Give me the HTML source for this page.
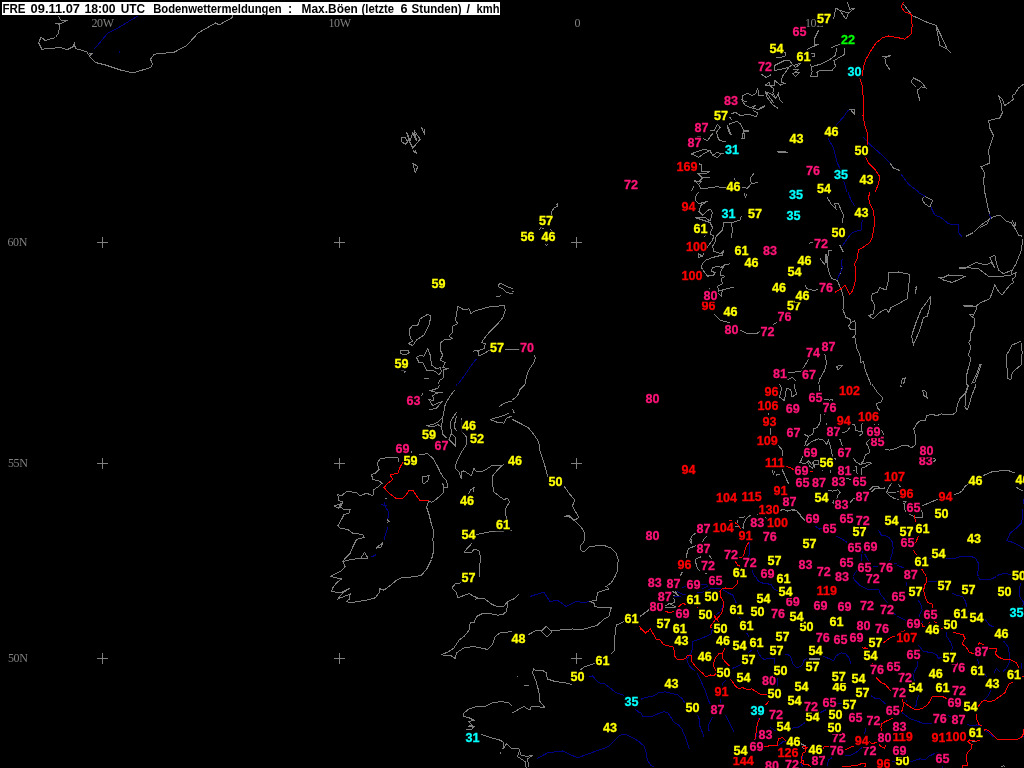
<!DOCTYPE html>
<html lang="de"><head><meta charset="utf-8"><title>Bodenwettermeldungen : Max.B&ouml;en</title>
<style>
html,body{margin:0;padding:0;background:#000;overflow:hidden}
svg{display:block;will-change:transform}
.g polyline{stroke:#808080}
.b polyline{stroke:#000084}
.r polyline{stroke:#ff0000}
polyline{fill:none;stroke-width:1;shape-rendering:crispEdges}
.n text{font:bold 12.6px "Liberation Sans", Arial, Helvetica, sans-serif;stroke-width:0.3px}
.n rect{fill:#000}
.l{font:12px "Liberation Serif", "Times New Roman", serif;fill:#808080;letter-spacing:-0.4px}
.x{stroke:#808080;stroke-width:1;shape-rendering:crispEdges}
.h{font:bold 12.6px "Liberation Sans", Arial, Helvetica, sans-serif;fill:#000}
</style></head><body>
<svg width="1024" height="768" viewBox="0 0 1024 768">
<rect width="1024" height="768" fill="#000"/>

<g class="g">
<polyline points="58.5,16.0 60.5,20.0 66.8,20.5 61.8,23.0 55.0,23.8 60.0,24.2 58.5,33.0 55.5,37.5 45.0,40.5 41.0,36.8 38.8,43.0 41.8,49.2 60.5,47.5 66.8,49.8 73.0,46.8 74.2,43.0 75.5,48.5 86.8,51.8 88.0,54.2 93.0,53.0 89.2,56.0 95.5,62.5 105.5,65.0 120.5,70.0 133.0,73.0 150.5,67.5 152.5,64.2 150.5,59.2 154.2,54.2 174.2,52.2 186.8,45.5 198.0,33.0 215.5,23.0 219.2,24.8 231.8,18.0 233.0,15.5"/>
<polyline points="401.5,138.0 405.2,137.5 407.8,141.8 405.2,144.2 401.5,141.8 401.5,138.0"/>
<polyline points="406.5,131.8 410.2,140.5 412.8,133.0 416.5,140.5 414.0,130.5 420.2,139.2 412.8,148.0 409.0,140.5 406.5,131.8"/>
<polyline points="421.5,127.5 425.2,135.5 424.0,129.2"/>
<polyline points="412.8,150.5 416.5,153.5 415.2,150.0"/>
<polyline points="412.8,163.0 417.8,166.8 415.2,172.5 412.8,163.0"/>
<polyline points="780.3,51.3 785.9,52.3 785.0,56.0 779.4,57.9 775.6,56.9"/>
<polyline points="811.3,53.2 814.1,53.2 814.1,56.0 812.2,56.0"/>
<polyline points="836.6,48.5 835.6,55.1 830.9,58.8 822.5,63.5 811.3,66.9 810.3,64.4"/>
<polyline points="811.3,66.9 812.2,71.9 810.3,76.6 817.8,76.6 816.9,71.9 820.6,70.1 831.9,70.6 835.6,66.3 833.8,60.7 845.0,54.1 844.1,48.5"/>
<polyline points="774.7,65.4 784.1,60.7 789.7,60.7 792.5,64.4 788.8,67.3 781.3,69.1 774.7,70.6 774.7,65.4"/>
<polyline points="792.5,64.4 795.3,67.3 800.0,64.4"/>
<polyline points="792.5,69.1 799.1,69.1 794.4,72.9 799.1,72.9 795.3,76.6 792.5,72.9"/>
<polyline points="760.6,73.8 766.3,77.6 770.9,74.8"/>
<polyline points="788.8,67.3 785.0,72.9 782.2,76.6 781.3,82.3 785.0,83.2 780.3,85.1 774.7,80.4 774.7,85.1 770.0,86.0 765.3,85.1 769.1,82.3 770.0,86.0"/>
<polyline points="770.0,86.0 773.8,88.8 772.8,92.6 775.6,98.2 778.4,93.5 779.4,99.1 783.1,102.9"/>
<polyline points="765.3,91.6 771.9,94.4 774.7,98.2"/>
<polyline points="765.3,91.6 767.2,97.3 772.8,104.8 778.4,108.5"/>
<polyline points="766.3,92.6 773.8,102.9"/>
<polyline points="757.8,87.9 755.9,93.5 752.2,95.4 747.5,93.5 742.8,95.4 741.9,100.1 744.7,104.8 750.3,107.6 755.0,105.7 753.1,108.5 758.8,109.4 765.3,106.3"/>
<polyline points="758.8,108.7 765.3,105.5"/>
<polyline points="741.9,100.1 746.6,101.9"/>
<polyline points="757.8,87.9 758.8,95.4 764.4,95.4"/>
<polyline points="730.6,114.1 735.3,112.3 740.9,116.0 746.6,114.1 751.3,115.1 755.9,116.9 757.8,113.2 753.1,110.4"/>
<polyline points="729.7,116.9 731.6,119.8"/>
<polyline points="728.8,124.4 732.5,122.6 737.2,121.6 740.9,124.4 743.8,131.0 744.7,138.5 741.9,138.5 742.8,133.8 744.7,130.4 749.0,130.4"/>
<polyline points="744.7,131.2 749.0,131.2"/>
<polyline points="726.9,125.4 728.8,131.0 730.6,134.8"/>
<polyline points="727.6,125.4 729.5,131.0 731.4,134.8"/>
<polyline points="710.0,130.1 713.8,131.0 717.5,124.4 720.3,127.3 716.6,131.9 717.5,136.6 719.4,140.4 725.9,141.7"/>
<polyline points="696.9,136.1 700.6,136.1"/>
<polyline points="703.4,138.5 707.2,140.8 712.8,133.8 710.0,136.6"/>
<polyline points="691.3,153.9 696.9,151.6 704.4,149.2 710.0,150.7 705.3,152.6 698.8,157.3 691.3,153.9"/>
<polyline points="710.0,150.7 712.8,155.4 716.6,152.6 721.3,153.5 724.1,153.9"/>
<polyline points="712.8,155.4 717.5,157.8 721.3,153.5"/>
<polyline points="698.8,163.8 701.0,164.4 701.0,171.3 710.0,171.3 705.3,173.8 697.8,173.2"/>
<polyline points="697.8,173.2 702.5,177.9 710.0,177.5"/>
<polyline points="702.5,177.9 698.8,181.6 694.1,180.7 698.8,184.4 701.6,180.7"/>
<polyline points="694.1,186.3 691.3,191.0"/>
<polyline points="698.8,184.4 700.6,188.2 706.3,188.2 715.6,186.9 726.9,187.3"/>
<polyline points="734.4,177.9 735.3,180.7"/>
<polyline points="754.1,173.2 750.3,177.9 751.3,183.5 757.8,182.6"/>
<polyline points="751.3,183.5 747.5,188.2 741.9,187.3"/>
<polyline points="777.5,151.3 787.8,152.2"/>
<polyline points="777.5,152.0 787.8,152.9"/>
<polyline points="903.5,4.2 912.2,15.5 926.0,21.8 936.0,25.5 941.0,35.5 947.2,49.2 951.0,53.0"/>
<polyline points="936.0,25.5 939.8,45.5 947.2,49.2"/>
<polyline points="882.2,56.8 891.0,55.5 884.8,58.0 886.0,64.2 890.2,70.0"/>
<polyline points="911.0,81.8 913.5,78.0 921.0,81.8 926.0,88.0 921.0,86.8 917.2,90.5 919.8,100.5"/>
<polyline points="911.0,81.8 916.0,86.8"/>
<polyline points="1023.5,84.2 1018.5,88.0 1014.8,94.2 1012.2,95.5 1013.5,99.2 1008.5,103.0 1004.8,105.5 1002.2,99.2 998.5,95.5 1001.0,103.0 1002.2,113.0 999.8,118.0 988.5,120.5 989.8,128.0 993.5,135.5 988.5,150.5 989.8,163.0 981.0,166.8 984.8,173.0 983.5,180.5 984.8,192.5"/>
<polyline points="847.2,1.8 849.8,9.2 854.8,8.0 848.5,13.0 846.0,19.2 839.8,10.5 836.0,8.0 833.5,19.2"/>
<polyline points="839.8,10.5 848.5,13.0"/>
<polyline points="818.5,30.5 814.8,38.0 814.2,44.2 818.5,44.2 807.2,49.2"/>
<polyline points="793.5,65.5 801.0,63.0"/>
<polyline points="831.0,48.0 836.0,45.5 841.0,44.2"/>
<polyline points="848.5,109.8 854.8,109.8 854.8,114.2 851.0,110.5"/>
<polyline points="889.8,163.0 893.5,168.0 899.8,170.5"/>
<polyline points="497.8,286.2 500.2,283.0 506.5,286.2 512.5,288.8"/>
<polyline points="512.5,293.8 506.5,292.5 502.8,288.8 497.8,286.2"/>
<polyline points="496.5,297.0 501.5,295.5"/>
<polyline points="427.8,314.2 431.0,316.2 429.0,325.0 424.0,335.0 416.5,340.0 412.8,345.5 408.2,343.8 412.8,341.2 410.2,337.5 409.0,330.0 412.8,325.0 417.8,325.0 420.2,318.8 427.8,314.2"/>
<polyline points="399.8,350.5 407.8,350.0 409.5,352.5 405.2,355.0 401.0,353.8 399.8,350.5"/>
<polyline points="401.0,370.5 405.2,371.2 404.8,373.0"/>
<polyline points="416.5,357.5 420.2,355.0 424.0,356.2 427.8,348.8 430.2,355.0 431.5,365.0 436.5,368.8 440.2,367.5 441.5,371.2 439.0,375.0 435.2,371.2 426.5,370.0 422.8,362.5 419.0,362.5 416.5,357.5"/>
<polyline points="424.5,378.8 429.0,378.0"/>
<polyline points="457.8,306.2 464.0,310.0 469.0,308.8 471.0,313.8 474.0,311.2 489.0,307.0 504.0,305.5 505.2,310.0 502.8,317.5 497.8,323.8 489.0,332.5 484.0,338.8 481.5,342.5 485.2,343.8 484.0,348.8 477.8,350.5 472.8,351.2"/>
<polyline points="477.8,350.5 479.0,356.2 490.2,350.0"/>
<polyline points="504.5,349.2 512.5,349.2"/>
<polyline points="457.8,306.2 456.5,315.0 455.2,320.0 457.8,323.8 452.8,326.2 452.8,332.5 449.0,336.2 452.8,338.8 444.0,340.0 440.8,342.5 440.2,350.0 442.8,355.0 440.2,360.0 445.2,362.5 442.8,367.5 447.8,368.8 443.5,370.0 444.0,377.5 440.2,380.0 437.8,384.5"/>
<polyline points="558.0,203.0 557.5,206.2 553.8,208.0 552.0,211.2 551.2,214.5"/>
<polyline points="556.2,204.5 558.0,203.0"/>
<polyline points="538.8,230.0 541.2,227.5 543.8,228.8"/>
<polyline points="550.0,228.8 552.5,231.2"/>
<polyline points="544.5,243.8 546.2,245.5 548.2,244.5"/>
<polyline points="512.5,291.2 513.8,291.8"/>
<polyline points="512.5,349.2 519.5,350.0"/>
<polyline points="533.8,355.0 535.5,357.5 533.8,362.5 528.8,370.0 526.2,377.5 525.0,384.5"/>
<polyline points="698.8,192.5 696.2,195.0 695.0,200.0 698.8,203.8 707.5,201.2 701.2,205.0 698.8,211.2 702.5,215.0 710.0,208.8 712.5,212.5 710.0,221.2 705.0,217.5 695.0,217.5 702.5,220.0 710.0,222.5 712.5,227.5 710.0,233.8 713.8,236.2 712.5,240.0 706.2,248.8 702.5,256.2 698.8,257.5 698.8,253.8 702.5,256.2"/>
<polyline points="706.2,235.0 703.8,237.0"/>
<polyline points="741.2,216.2 740.0,220.0 732.5,222.5 723.8,222.5 722.5,230.0 716.2,236.2 715.0,242.5 712.5,246.2 713.8,251.2 721.2,253.8 723.8,250.0 722.5,255.0 712.5,257.5 706.2,260.0 702.5,263.8 701.2,267.5 703.8,271.2 707.5,276.2 713.8,275.0 715.0,272.5 711.2,271.2 712.5,267.5 718.8,266.2 721.2,267.5 723.8,265.0 730.0,263.8 725.0,265.0 721.2,270.0 720.0,275.0 725.0,276.2 721.2,278.8 722.5,283.8 717.5,286.2 718.8,291.2 722.5,290.0 733.8,287.0"/>
<polyline points="722.5,290.0 721.2,296.2 717.5,292.5"/>
<polyline points="731.2,222.5 732.5,230.0 731.2,237.5"/>
<polyline points="743.8,192.5 745.5,197.0 746.8,193.8"/>
<polyline points="713.8,313.8 720.0,320.0 730.0,323.0"/>
<polyline points="740.0,330.0 747.5,333.8 756.2,333.8 760.0,331.2"/>
<polyline points="708.8,287.5 710.0,289.5"/>
<polyline points="827.2,197.5 831.0,203.8 836.0,208.8 834.8,203.8 838.5,203.8 841.0,210.0 843.5,215.0 842.2,222.5"/>
<polyline points="808.5,243.2 813.5,242.5"/>
<polyline points="839.8,245.0 842.8,252.0"/>
<polyline points="840.2,245.0 843.2,252.0"/>
<polyline points="819.8,258.0 824.8,265.0 826.0,253.8 827.2,265.0 828.5,250.0 832.2,250.0"/>
<polyline points="827.2,265.0 829.8,275.0 832.2,278.8 837.2,280.5 841.0,288.8 843.5,297.5 843.0,310.0 846.0,317.5 849.8,318.8 851.0,322.5 854.8,320.5 856.0,328.8 851.0,330.0 848.5,326.2 851.0,322.5"/>
<polyline points="856.0,328.8 854.8,336.2 852.2,338.0 854.8,336.2 856.5,347.5 859.8,355.0 861.0,362.5 863.5,361.2 864.8,368.8 867.2,375.0 871.0,384.5"/>
<polyline points="842.2,267.5 838.5,277.5"/>
<polyline points="804.8,285.0 807.2,288.8 814.8,290.8 818.5,288.8"/>
<polyline points="773.0,324.5 777.2,322.5"/>
<polyline points="824.8,353.8 826.5,362.5 824.8,370.0 819.8,378.8 818.5,384.5"/>
<polyline points="808.5,359.5 803.5,367.5 801.0,371.2 788.5,373.0"/>
<polyline points="782.2,378.8 787.2,380.0 792.2,377.5 796.0,381.2"/>
<polyline points="836.5,366.2 842.2,365.5 838.0,370.0 836.5,366.2"/>
<polyline points="888.5,273.0 898.5,272.0 907.2,273.8 909.8,275.0 908.5,287.5 907.2,298.8 898.5,303.8 891.0,307.5 888.5,312.5 886.0,308.8 879.8,312.5 873.5,318.8 868.5,315.8 873.5,313.8 874.8,305.0 871.0,298.8 872.2,293.8 877.2,292.5 879.8,287.5 886.0,290.0 888.0,282.5 888.5,273.0"/>
<polyline points="931.0,296.2 929.8,307.5 927.2,316.2 923.5,317.5 919.8,330.0 913.5,344.5 911.5,336.2 916.0,322.5 921.0,310.0 931.0,296.2"/>
<polyline points="914.8,287.5 916.5,287.0 915.2,293.8"/>
<polyline points="901.0,384.5 902.2,378.8 905.2,378.0 903.5,384.5"/>
<polyline points="938.0,277.0 943.5,277.5 948.5,275.0 966.0,276.2 952.2,282.5 943.5,280.0 938.0,277.0"/>
<polyline points="958.5,267.5 966.0,267.5 976.0,262.5 986.0,265.0 991.0,262.5 994.8,267.5 989.8,257.5 994.8,255.0 996.0,261.2 998.5,270.0 1003.5,273.8 1012.2,270.0 1011.0,275.0 1016.0,272.5 1014.8,277.5 1012.2,278.8 1013.5,282.5 1009.8,285.0 1002.2,295.0 998.5,291.2 994.8,285.0 989.8,298.8 981.0,302.5 976.0,306.2 963.5,305.5"/>
<polyline points="958.5,268.0 966.0,268.0"/>
<polyline points="963.5,306.0 976.0,306.8"/>
<polyline points="976.0,306.2 976.0,310.0 973.5,315.0 968.5,313.8 974.8,318.8 974.8,325.0 971.0,332.5 970.5,340.0 968.5,342.5 971.0,346.2 968.5,355.0 971.0,358.8 968.5,367.5 966.0,377.5 966.0,384.5"/>
<polyline points="966.0,267.5 978.5,268.8 988.5,276.2 1002.2,276.2 1011.0,275.0"/>
<polyline points="984.8,192.5 988.5,210.0 989.8,213.8"/>
<polyline points="990.2,218.8 994.8,216.2 999.8,215.0 1006.0,221.2 1011.0,222.5 1016.0,230.0 1018.5,235.0 1022.2,236.2"/>
<polyline points="1012.2,220.0 1014.8,226.2 1016.0,222.5"/>
<polyline points="966.0,236.2 973.5,232.5 981.0,225.0 989.8,218.8 987.2,223.8 979.8,227.5"/>
<polyline points="1023.0,238.8 1021.0,251.2 1016.0,263.8 1012.2,270.0"/>
<polyline points="921.8,198.8 924.8,196.2 932.8,200.5 929.8,207.0 924.8,203.8 921.8,198.8"/>
<polyline points="1021.0,341.2 1012.2,345.0 1006.0,356.2 1008.0,378.8 1011.0,379.5 1012.2,372.5 1021.0,365.0 1022.2,352.5 1021.0,342.5"/>
<polyline points="981.5,363.8 978.5,372.5 974.8,382.5 972.2,383.0 977.2,372.5 979.8,364.5 981.5,363.8"/>
<polyline points="399.0,462.0 397.8,457.0 389.0,457.0 380.2,459.0 377.0,463.2 379.0,469.5 375.2,473.2 371.5,474.5 372.8,479.5 379.0,480.8 382.2,483.2 377.8,487.0 374.0,489.5 372.8,495.8 366.5,493.2 360.2,495.8 356.5,492.5 346.5,491.5 341.5,495.8 337.8,494.5 339.0,500.8 342.8,502.0 340.2,507.0 344.0,509.5 350.2,509.5 349.0,513.2 344.0,514.5 340.2,522.0 337.8,525.8 340.2,528.2 347.8,529.5 352.8,533.2 362.8,534.5 364.0,537.5 356.5,539.5 352.8,547.0 350.2,553.2 345.2,558.2 342.8,561.5 351.5,559.5 361.5,558.2 367.8,558.2"/>
<polyline points="342.8,561.5 345.2,567.0 341.5,570.8 336.5,573.2 330.2,576.5"/>
<polyline points="334.0,506.2 340.2,504.0 339.0,508.2 334.0,506.2"/>
<polyline points="361.0,557.8 364.5,552.5 367.8,557.8"/>
<polyline points="376.0,548.2 382.8,542.5 381.0,547.0 376.0,548.2"/>
<polyline points="387.0,519.5 389.0,521.5 387.0,522.8"/>
<polyline points="419.0,454.5 427.8,453.8 432.8,458.2 436.5,464.5 440.2,472.0 442.8,476.5 446.5,480.8 447.8,487.0 444.0,487.5 442.8,483.2 444.0,492.0 440.2,495.8 435.2,500.0 431.5,502.5 429.0,500.8"/>
<polyline points="429.0,500.8 426.5,507.0 429.0,514.5 431.5,524.5 434.0,532.0 432.8,539.5 434.0,549.5 431.5,559.5 426.5,569.5 421.5,575.0 416.5,576.5"/>
<polyline points="422.0,476.5 429.0,475.8 427.8,480.8 424.0,483.8 422.0,482.5 422.0,476.5"/>
<polyline points="411.0,451.5 412.0,453.2"/>
<polyline points="384.5,498.2 386.5,498.2"/>
<polyline points="440.2,384.5 437.8,388.2 430.2,390.8 435.2,392.0 442.8,392.0 436.5,393.2 432.8,395.8 434.0,400.8 429.0,399.5 432.8,405.8 437.8,403.2 441.5,402.0 436.5,408.2 429.0,410.0"/>
<polyline points="455.2,389.5 450.2,395.8 445.2,404.5 442.8,417.0 441.5,427.0 437.8,424.5 432.8,427.0 426.5,425.8 432.8,424.5 437.8,422.0 442.8,417.0"/>
<polyline points="441.5,427.0 442.8,434.5 446.5,438.2"/>
<polyline points="456.5,412.0 450.2,422.0 451.5,433.2 449.0,439.5 455.2,445.8 455.8,438.2 451.5,433.2"/>
<polyline points="456.5,415.8 454.0,427.0 456.5,430.8"/>
<polyline points="461.5,418.2 461.5,430.8 466.5,437.0 466.5,444.5 461.5,452.0 456.5,462.0 455.2,468.2 459.0,472.0 461.5,479.0 461.5,472.0 464.0,470.8 471.5,475.8 474.0,468.2 476.5,472.0 484.0,470.8 491.5,465.8 502.8,465.0 497.8,469.5 492.8,475.8 492.2,483.2 494.0,492.0 500.2,497.0 504.0,499.5 507.8,498.2 509.5,502.0 505.2,509.5 506.5,519.5 507.8,527.0"/>
<polyline points="512.5,400.8 504.0,403.2 499.0,407.0"/>
<polyline points="490.2,419.5 496.5,422.0 504.0,423.2 506.5,418.2 512.5,415.8"/>
<polyline points="490.2,419.5 502.8,415.8 509.0,413.2"/>
<polyline points="468.5,494.0 471.0,489.5 474.0,487.5 472.8,492.5"/>
<polyline points="476.5,534.5 489.0,532.0 496.5,531.2 512.5,530.8"/>
<polyline points="472.0,543.2 464.0,552.0 471.5,552.5 474.0,549.0 479.0,550.8 481.0,559.5 479.0,567.0 479.0,576.5"/>
<polyline points="422.8,393.2 421.5,395.8"/>
<polyline points="525.0,384.5 520.0,389.5 517.5,395.8 512.5,400.0"/>
<polyline points="512.5,409.5 514.5,412.5 512.5,413.2"/>
<polyline points="512.5,419.5 520.0,423.2 528.8,428.2 533.8,434.5 538.8,442.0 540.0,450.8 543.8,462.0 547.5,475.8 549.5,478.2"/>
<polyline points="563.8,485.8 570.0,494.5 575.0,500.0 572.5,505.8 575.0,510.8 578.8,517.0 576.2,519.5 572.5,519.0 568.8,515.0 563.8,517.0 568.8,516.5 572.5,519.0 580.0,525.8 583.8,530.8 585.0,537.0 583.8,542.0 580.0,545.8 580.0,549.5 583.8,552.0 588.8,547.0 596.2,545.8 605.0,545.8 611.2,548.2 616.2,553.2 618.2,559.5 617.5,570.8 615.0,576.5"/>
<polyline points="330.2,576.5 336.5,577.8 341.5,579.0 336.5,582.8 332.8,587.8 331.5,591.5 340.2,592.8 350.2,587.8 342.8,592.8 337.8,599.0 344.0,596.5 350.2,594.0 349.5,599.0 346.5,601.5 351.5,602.8 357.8,601.5 366.5,600.2 375.2,597.8 379.0,592.8 379.0,588.5 384.0,590.2 389.0,586.5 396.5,580.2 401.5,577.8 416.5,576.5"/>
<polyline points="461.5,582.8 455.2,584.0 452.0,587.8 456.5,592.8 457.8,597.8 469.0,593.5 474.0,596.5 477.8,597.8 476.5,599.0 484.0,598.5 491.5,604.0 497.8,607.0 504.0,606.0 507.8,601.5 512.5,599.5"/>
<polyline points="507.8,601.5 506.5,611.5 502.8,614.5 497.8,615.2 489.0,613.5 481.5,614.0 476.5,616.5 474.0,622.8 470.2,622.8 469.0,630.2 464.0,636.5 459.0,640.2 454.0,647.8 449.0,651.5 442.0,654.5 445.2,656.0 450.2,655.2 455.2,658.5 456.5,652.8 464.0,647.8 474.0,646.5 487.8,649.5 492.8,644.0 495.2,636.5 500.2,632.8 512.5,631.5"/>
<polyline points="512.5,706.5 509.0,702.8 501.5,701.5 492.8,702.8 485.2,706.5 476.5,706.5 469.0,709.0 464.0,712.8 463.5,716.5 469.0,717.8 474.0,720.2 469.0,721.5 472.0,725.2 467.8,726.5 474.0,726.5 471.5,729.5 466.0,729.5"/>
<polyline points="481.5,734.5 491.5,737.8 500.2,740.2 504.0,742.8 502.8,749.0 506.5,744.0 512.5,749.0"/>
<polyline points="500.2,751.5 500.2,754.0"/>
<polyline points="615.0,576.5 611.2,582.8 606.2,586.5 608.8,589.0 603.8,590.2 597.5,592.8 596.2,600.2 588.8,601.5 593.8,602.8 595.0,606.5 601.2,607.8 611.2,607.8 608.8,616.5 603.8,619.0 597.5,625.2 582.5,629.5 572.5,629.0 557.5,630.2 551.2,630.2"/>
<polyline points="541.2,631.5 546.2,626.5 552.0,632.0 547.0,637.0 541.2,631.5"/>
<polyline points="541.2,630.2 535.0,631.0 527.5,635.2"/>
<polyline points="512.5,600.2 518.8,594.0"/>
<polyline points="648.8,610.2 640.0,616.5"/>
<polyline points="623.8,621.5 616.2,625.2 614.5,639.0 615.0,650.2 611.2,653.5"/>
<polyline points="595.0,663.5 585.0,666.5 580.0,670.2"/>
<polyline points="572.5,684.5 565.0,682.8 555.0,681.5 547.5,679.0 546.2,672.8 542.5,670.2 536.2,671.0 533.8,669.0 532.5,672.8 536.2,681.5 538.8,691.5 540.0,701.5 545.0,707.8 537.5,706.5 531.2,706.5 530.0,710.2 523.8,706.5 512.5,712.8"/>
<polyline points="517.0,676.5 518.0,677.0"/>
<polyline points="523.8,685.8 528.8,685.8"/>
<polyline points="512.5,748.5 518.8,748.5 521.2,755.2 527.5,756.5 532.5,755.2 527.5,759.0 528.8,766.5"/>
<polyline points="520.0,749.0 517.5,756.5 525.0,761.5 526.2,768.5"/>
<polyline points="768.9,412.6 768.9,415.1"/>
<polyline points="770.8,428.2 770.8,434.5"/>
<polyline points="778.2,445.4 782.0,449.5 782.2,456.4"/>
<polyline points="782.0,469.5 784.5,474.5 787.0,480.5"/>
<polyline points="772.6,470.1 773.2,474.5 775.1,470.8"/>
<polyline points="775.8,475.1 780.1,474.5"/>
<polyline points="779.5,384.5 782.0,388.2 780.8,392.0 779.5,397.0 784.5,400.8 785.8,392.0 787.0,388.2 790.8,389.5 792.0,397.0 797.0,393.9 795.1,389.5 794.5,384.5"/>
<polyline points="896.5,448.2 901.5,445.8 908.4,446.0 911.2,448.0 915.9,444.5 915.2,434.5 913.8,428.9 916.5,423.9 920.9,420.1 925.5,421.0 926.5,415.1 934.0,414.8 936.5,415.8 941.5,413.9 946.5,414.8 952.1,414.8 955.9,412.6 957.8,403.2 960.2,398.2 964.6,393.9 967.8,388.2 968.4,384.5"/>
<polyline points="967.8,384.5 965.2,397.0 965.0,407.0 967.1,410.1 968.4,407.6 971.5,396.4 975.2,387.0 975.5,384.5"/>
<polyline points="922.8,389.8 925.9,391.4 927.1,398.0 923.4,395.1 922.8,389.8"/>
<polyline points="900.2,384.5 900.2,386.0 902.1,386.0"/>
<polyline points="933.4,458.2 936.2,459.9 933.4,461.8"/>
<polyline points="982.8,475.8 991.5,472.0 1000.2,470.8 1009.0,470.8 1015.2,473.2"/>
<polyline points="696.1,533.0 692.4,535.5 689.9,540.5 691.1,543.6 691.8,539.2"/>
<polyline points="707.4,535.5 704.2,538.6 702.4,542.4"/>
<polyline points="696.1,545.5 688.6,548.6 686.8,554.2 686.8,558.0"/>
<polyline points="699.9,555.5 700.2,557.4 696.1,558.6 695.5,561.8 697.4,568.0 699.9,571.1"/>
<polyline points="709.2,555.5 712.4,559.5"/>
<polyline points="704.9,573.0 707.4,573.0"/>
<polyline points="682.4,571.8 679.9,576.5"/>
<polyline points="712.0,526.1 712.0,527.4"/>
<polyline points="712.0,531.1 712.0,532.0"/>
<polyline points="739.2,518.0 745.5,516.8"/>
<polyline points="737.4,520.5 738.0,522.4"/>
<polyline points="751.1,514.9 746.8,518.0 743.6,523.6 743.0,527.4 744.2,529.2"/>
<polyline points="756.8,513.6 757.4,514.9"/>
<polyline points="734.9,526.8 738.6,527.0"/>
<polyline points="765.5,517.4 768.5,520.5"/>
<polyline points="780.4,511.1 782.9,509.0 787.2,511.1 792.2,509.5 796.6,510.2 799.8,514.2 802.9,518.6 805.4,521.1"/>
<polyline points="792.2,510.0 796.6,510.8 799.8,514.8 802.9,519.1 804.8,521.1"/>
<polyline points="827.9,489.9 832.2,491.1 837.9,489.9 840.0,492.4 837.9,495.5 836.6,499.2"/>
<polyline points="833.5,500.5 832.9,502.4 834.8,504.2"/>
<polyline points="849.8,503.0 853.5,498.6 856.0,497.4"/>
<polyline points="869.8,489.9 873.5,486.1 877.2,486.1 879.8,488.0 874.8,488.6 871.6,491.8"/>
<polyline points="873.5,486.6 877.2,486.6 879.5,488.5"/>
<polyline points="879.8,488.0 883.5,488.6 885.4,487.4"/>
<polyline points="891.6,483.0 889.1,486.8 886.6,492.4 888.5,494.9 893.5,498.0 896.5,499.2"/>
<polyline points="887.9,492.4 893.5,493.0 896.5,491.8"/>
<polyline points="787.2,480.5 788.5,483.6"/>
<polyline points="968.4,483.6 964.6,486.8 962.1,491.1 959.0,493.0 954.0,494.9"/>
<polyline points="938.4,499.0 930.2,502.4 922.1,505.9"/>
<polyline points="896.5,491.1 899.0,491.1"/>
<polyline points="896.5,499.2 899.6,499.2"/>
<polyline points="897.8,483.6 900.2,486.8"/>
<polyline points="902.8,501.1 907.1,501.1 904.0,503.6 905.2,511.1 909.0,512.4"/>
<polyline points="902.8,501.6 907.1,501.6"/>
<polyline points="909.6,514.2 915.2,517.4 922.8,517.8 922.8,513.6 921.5,510.5"/>
<polyline points="1016.5,487.4 1020.2,489.9 1023.4,490.2"/>
<polyline points="640.5,615.9 649.2,609.6"/>
<polyline points="672.4,591.2 678.6,595.9"/>
<polyline points="674.9,590.9 678.0,595.2"/>
<polyline points="673.0,595.9 679.2,596.2"/>
<polyline points="673.0,597.8 674.9,599.6 674.2,602.8 668.6,604.0 664.9,605.9"/>
<polyline points="664.9,607.8 676.1,607.8"/>
<polyline points="669.9,604.0 676.1,606.8"/>
<polyline points="808.5,658.8 819.8,658.8"/>
<polyline points="808.5,659.2 819.8,659.2"/>
<polyline points="814.1,657.8 814.1,660.0"/>
<polyline points="801.2,743.5 806.0,746.2"/>
<polyline points="801.2,744.0 806.0,746.8"/>
<polyline points="801.6,747.5 804.8,748.5"/>
<polyline points="971.5,740.6 974.6,741.9"/>
<polyline points="1001.5,766.9 1003.8,765.6 1005.5,767.2"/>
<polyline points="819.8,384.5 819.8,391.4"/>
<polyline points="823.5,398.9 829.8,400.1 832.2,399.5 833.5,401.4"/>
<polyline points="821.0,413.9 819.8,423.2 817.2,427.6 813.5,428.9 812.9,433.9 808.5,436.4 804.1,433.9 808.5,437.0 805.4,442.6 804.8,445.8"/>
<polyline points="824.1,414.9 825.4,414.9"/>
<polyline points="826.9,422.6 826.9,425.1"/>
<polyline points="806.6,445.8 811.6,441.4 818.5,438.9 823.5,440.1 826.6,444.5 828.5,440.1 830.4,445.8 832.2,454.5 832.2,457.0"/>
<polyline points="803.5,454.5 801.6,459.5 799.8,462.6 805.4,463.9 808.5,460.8 811.6,464.5 813.5,462.0 812.9,468.2 809.8,466.4 807.2,461.4"/>
<polyline points="813.5,460.1 818.5,460.1 818.5,464.5 814.8,464.5 814.1,468.2"/>
<polyline points="841.6,433.2 846.6,431.4 849.8,427.6"/>
<polyline points="839.8,438.9 842.2,445.8"/>
<polyline points="851.6,423.9 854.8,424.5 856.0,430.8 861.0,431.4 862.2,423.2"/>
<polyline points="861.0,431.4 862.9,432.0 861.6,434.5 859.1,435.8"/>
<polyline points="874.1,423.9 874.1,425.1"/>
<polyline points="878.9,423.9 879.1,425.1"/>
<polyline points="881.6,430.1 884.1,435.1"/>
<polyline points="870.4,438.9 866.0,443.2 868.5,446.4 869.8,452.6 865.4,455.1 863.5,460.8 860.4,464.5 856.0,462.0 852.9,457.6"/>
<polyline points="860.4,464.5 867.2,462.6 869.8,462.0 871.6,463.2 868.5,464.5 865.4,467.0 861.6,468.2 861.0,475.1"/>
<polyline points="854.8,467.0 856.0,465.8 857.2,474.5"/>
<polyline points="852.9,470.8 854.8,470.8"/>
<polyline points="872.2,384.5 877.2,392.0 882.9,397.6 881.0,402.0 876.0,403.9 878.5,409.5 879.8,410.1"/>
<polyline points="884.8,448.9 889.8,450.1 896.5,448.2"/>
<polyline points="834.8,458.2 836.0,459.5"/>
<polyline points="822.2,470.1 822.9,471.0"/>
<polyline points="830.4,470.1 830.4,472.6"/>
<polyline points="846.0,478.0 851.0,479.5"/>
</g>
<g class="b">
<polyline points="138.0,16.0 128.0,21.8 118.0,28.0 108.0,33.0 100.5,41.8 94.2,49.2"/>
<polyline points="118.8,50.5 119.8,53.0"/>
<polyline points="848.5,109.8 843.5,116.8 836.0,125.5"/>
<polyline points="827.2,136.8 833.5,148.0 837.2,163.0 841.0,170.5"/>
<polyline points="843.5,180.5 847.2,192.5"/>
<polyline points="863.5,137.5 871.0,145.5 881.0,154.2 889.8,162.5"/>
<polyline points="901.0,174.2 908.5,184.2 918.5,191.8"/>
<polyline points="476.5,358.8 471.5,365.0 464.0,376.2 457.8,384.5"/>
<polyline points="848.0,192.5 851.0,200.0 854.8,206.2"/>
<polyline points="862.2,220.0 861.0,230.0 852.2,232.5 847.2,238.8 842.2,246.2"/>
<polyline points="842.2,258.8 841.0,265.0 842.8,267.5 839.8,273.8 837.2,279.5"/>
<polyline points="918.5,192.5 924.8,196.2"/>
<polyline points="931.0,207.5 934.8,215.0 941.0,217.5 948.5,223.8 958.5,225.0 958.5,232.5 962.2,237.0"/>
<polyline points="989.8,213.8 990.2,218.8"/>
<polyline points="384.0,502.0 385.2,507.0 389.0,512.0 387.8,519.5"/>
<polyline points="387.8,527.0 384.0,539.5"/>
<polyline points="376.5,554.5 371.5,557.0"/>
<polyline points="456.5,384.5 457.2,386.5"/>
<polyline points="381.5,504.5 386.5,505.8"/>
<polyline points="530.0,596.5 543.8,592.0 550.0,601.5 557.5,600.2 566.2,606.5 576.2,601.5 585.0,602.8 588.8,601.5"/>
<polyline points="588.8,676.5 592.5,676.0 598.8,682.8 605.0,684.0 616.2,692.8 623.8,695.2"/>
<polyline points="635.0,709.0 640.5,713.5"/>
<polyline points="537.5,758.5 547.5,752.8 562.5,751.0 577.5,757.8 595.0,751.5 608.8,746.5 620.0,735.2 625.0,734.0 635.0,739.0 640.5,742.8"/>
<polyline points="749.9,542.4 749.9,550.5 748.6,556.8"/>
<polyline points="751.8,569.9 753.6,574.2 754.9,576.5"/>
<polyline points="814.8,525.8 819.8,529.2 822.2,528.0"/>
<polyline points="836.0,535.9 842.2,539.2 847.2,542.4"/>
<polyline points="878.5,529.9 881.6,535.5 884.1,534.9 889.1,537.4 892.2,541.8 893.2,548.0 891.6,555.5 889.8,561.1"/>
<polyline points="862.2,551.1 861.6,558.0 861.0,561.1"/>
<polyline points="864.8,554.2 867.2,558.6 869.1,561.1"/>
<polyline points="872.9,567.0 877.9,566.1"/>
<polyline points="893.5,563.6 896.5,563.6"/>
<polyline points="857.2,569.9 854.8,573.6 853.5,576.5"/>
<polyline points="922.8,521.5 923.0,522.2"/>
<polyline points="918.0,537.4 917.8,539.2"/>
<polyline points="1023.0,499.2 1023.0,504.2"/>
<polyline points="1022.1,509.2 1022.5,516.8 1021.5,523.0 1016.5,528.0 1010.2,533.0 1008.4,537.4 1006.5,540.5 1012.8,542.4 1019.0,545.5 1024.5,549.2"/>
<polyline points="946.5,559.0 954.6,558.6 961.5,556.1 970.2,556.1 975.2,558.0 978.4,563.0 979.0,568.0 977.1,573.0 978.4,576.5"/>
<polyline points="929.6,559.0 931.5,558.0"/>
<polyline points="896.5,564.9 904.0,568.0"/>
<polyline points="996.5,576.1 1000.2,574.2 1006.5,573.6 1012.1,574.9"/>
<polyline points="681.8,587.8 686.1,586.5"/>
<polyline points="701.1,584.0 705.5,584.2 708.6,585.9 701.8,589.0"/>
<polyline points="676.8,591.5 681.8,594.0 686.1,595.0"/>
<polyline points="673.6,596.2 680.5,596.2"/>
<polyline points="696.8,592.8 703.0,592.1 709.2,589.6 711.8,588.0 720.5,588.0"/>
<polyline points="723.0,589.6 728.0,592.8 733.0,595.2 736.1,602.8"/>
<polyline points="723.0,605.2 720.5,611.5 715.5,615.2"/>
<polyline points="755.5,576.5 758.6,581.5 763.6,583.4 768.5,583.4"/>
<polyline points="738.6,616.5 741.1,619.0"/>
<polyline points="746.5,632.8 749.2,637.1"/>
<polyline points="756.8,649.6 760.5,656.5 764.2,659.6 768.5,658.4"/>
<polyline points="752.4,649.6 748.0,653.0"/>
<polyline points="712.4,629.0 711.1,634.0 700.5,638.8 692.4,641.5 693.0,647.8 690.5,654.0 688.6,656.5 686.8,659.6 688.6,664.6 690.5,667.1 695.5,671.5"/>
<polyline points="731.8,668.8 741.1,664.6 741.8,662.8"/>
<polyline points="768.5,584.0 771.0,584.6 774.1,589.0 778.5,591.2"/>
<polyline points="852.9,576.5 854.8,580.2 859.8,585.2 867.2,589.0 878.5,589.0 880.4,594.0 884.8,599.6 888.5,603.4"/>
<polyline points="893.5,613.4 896.5,615.2"/>
<polyline points="768.5,658.4 774.1,658.4 774.8,664.0"/>
<polyline points="784.8,654.6 787.2,654.0 790.4,656.5 792.9,664.0 797.2,667.8 801.6,665.9 804.1,660.2 807.2,658.4"/>
<polyline points="823.5,656.5 828.5,658.4 833.5,660.9 836.0,655.9 841.0,652.8 846.0,654.0 849.8,659.0 850.4,664.0"/>
<polyline points="927.8,581.1 937.8,581.1"/>
<polyline points="905.9,581.5 907.1,586.5"/>
<polyline points="977.8,576.5 980.2,579.6 991.5,579.0 996.5,576.5"/>
<polyline points="1020.9,582.8 1019.0,590.2 1020.2,597.8 1023.4,602.1 1022.8,606.5"/>
<polyline points="951.5,592.8 956.5,595.2 962.8,596.5 965.2,600.9 967.1,607.1"/>
<polyline points="917.8,599.6 920.9,604.6 922.1,609.6 919.0,616.5"/>
<polyline points="896.5,615.9 901.5,618.4 906.5,620.9"/>
<polyline points="922.1,620.9 923.4,623.4"/>
<polyline points="984.6,618.8 989.6,625.2 994.0,627.1"/>
<polyline points="945.9,631.5 946.5,635.9 950.9,642.8 952.8,647.8 950.9,651.5"/>
<polyline points="1003.4,640.9 1007.8,646.5 1009.6,654.0 1009.6,661.5 1006.5,668.4 1002.8,671.5"/>
<polyline points="918.4,645.2 923.4,651.5 931.5,652.5 936.5,654.6 938.4,658.4 942.1,657.1"/>
<polyline points="917.8,661.5 917.1,666.5 914.0,672.5"/>
<polyline points="977.8,659.0 978.4,664.0"/>
<polyline points="994.0,672.5 996.5,668.4 1000.2,672.1"/>
<polyline points="968.4,611.2 968.6,612.0"/>
<polyline points="1020.9,662.8 1022.1,669.0"/>
<polyline points="696.8,672.5 700.5,680.0 705.5,691.2 708.6,700.6 710.5,704.4"/>
<polyline points="726.1,680.0 723.0,683.1 722.4,685.6"/>
<polyline points="719.9,698.8 721.1,703.1"/>
<polyline points="640.5,699.4 645.5,697.5 653.0,696.2 659.2,692.5 665.5,691.9 678.0,695.0 682.4,698.8 685.5,703.8"/>
<polyline points="640.5,712.5 643.0,716.5 650.5,716.9 658.0,713.8 663.0,711.9 667.4,712.2 671.8,718.8 674.2,722.5 678.0,724.4 681.8,728.8 685.5,737.5 688.0,745.0 689.2,749.0"/>
<polyline points="697.4,715.0 699.2,718.8 699.9,726.2 702.4,732.5 704.2,737.2"/>
<polyline points="712.4,716.9 709.9,722.5 708.0,726.2 708.6,730.0 710.2,731.2"/>
<polyline points="725.5,715.0 728.0,720.0 731.1,726.2 734.2,732.2"/>
<polyline points="759.0,718.1 756.8,727.5 755.8,740.0"/>
<polyline points="640.5,743.1 644.2,746.2 646.1,752.5 647.4,760.0 650.5,765.0 653.6,767.1"/>
<polyline points="777.0,677.5 777.0,686.2"/>
<polyline points="871.0,695.6 874.8,698.1 879.8,698.8 885.4,703.8"/>
<polyline points="837.9,703.8 842.2,704.0"/>
<polyline points="820.4,712.5 826.0,709.8"/>
<polyline points="791.6,728.1 797.9,727.5 805.4,722.5"/>
<polyline points="770.4,727.5 776.0,731.2"/>
<polyline points="865.4,728.1 864.8,734.4"/>
<polyline points="778.5,745.6 783.5,741.2 786.0,741.9"/>
<polyline points="881.0,721.9 882.0,722.5"/>
<polyline points="844.8,755.6 849.8,755.6 856.0,752.5 862.2,747.5"/>
<polyline points="832.2,757.5 828.5,760.0 827.2,766.2"/>
<polyline points="802.5,753.8 801.9,760.0 801.5,765.0 803.5,767.5"/>
<polyline points="892.2,761.2 894.8,761.9"/>
<polyline points="912.8,672.5 913.4,677.5 915.2,681.2"/>
<polyline points="919.0,694.8 917.1,698.8 916.5,705.0 914.0,708.1"/>
<polyline points="905.9,700.0 907.1,702.5"/>
<polyline points="902.1,712.8 910.2,718.8 916.5,720.6 923.4,723.8 932.1,723.5"/>
<polyline points="947.8,715.6 950.9,716.9"/>
<polyline points="990.9,690.6 988.4,695.6 984.0,700.0"/>
<polyline points="966.5,723.8 970.2,725.6 976.5,725.0 982.1,726.2"/>
<polyline points="984.6,729.8 989.0,732.9 994.0,737.2"/>
<polyline points="985.9,674.4 986.2,677.5"/>
<polyline points="910.2,761.9 920.2,758.8 925.2,759.8 929.0,756.2 934.0,753.8 939.0,751.9"/>
<polyline points="942.8,765.6 943.0,767.5"/>
<polyline points="1022.1,736.2 1023.4,736.9"/>
</g>
<g class="r">
<polyline points="903.5,1.8 901.0,6.8 904.8,11.8 911.0,14.2 912.2,25.5 911.0,34.2 904.8,39.2 897.2,37.5 888.5,36.0 882.2,38.0 876.0,43.0 871.0,50.5 866.0,59.2 863.5,66.8 862.2,75.5 859.8,78.5 862.2,85.5 863.5,100.5 863.0,115.5 864.8,125.5 867.2,133.0 868.0,143.0 866.0,150.5 865.5,156.8 868.5,163.0 874.8,169.2 879.8,176.8 878.5,184.2 874.8,192.5"/>
<polyline points="869.8,192.5 868.5,197.5 869.8,203.8 873.5,211.2 874.8,222.5 872.2,237.5 869.8,242.5 863.5,247.0 858.5,250.0 857.2,258.8 854.8,263.8 856.0,275.0 854.8,283.8 852.2,291.2 849.8,294.5 844.8,285.0 841.0,288.8 834.8,292.5"/>
<polyline points="402.8,462.5 400.2,467.0 397.8,473.2 390.2,475.0 392.8,479.5 387.8,483.2 384.0,487.5 389.0,493.2 396.5,498.8 402.8,498.2 406.5,494.5 409.0,490.0 412.8,490.0 416.5,495.8 420.2,500.8 429.0,500.8"/>
<polyline points="786.4,466.6 790.8,468.0 794.2,470.1"/>
<polyline points="809.5,470.8 813.2,472.0"/>
<polyline points="639.6,625.5 640.9,629.2 645.9,633.2 648.4,631.1"/>
<polyline points="728.6,519.9 732.4,521.1"/>
<polyline points="734.9,522.4 739.2,526.1 740.5,529.2"/>
<polyline points="748.6,542.4 745.5,548.0 743.6,555.5 742.4,557.0 738.6,558.0"/>
<polyline points="735.5,561.5 737.4,564.9 740.5,566.5"/>
<polyline points="914.0,514.9 915.0,519.2 916.2,522.4"/>
<polyline points="918.4,535.5 917.1,539.2 915.5,543.0"/>
<polyline points="912.8,549.5 915.2,553.0 917.5,555.2"/>
<polyline points="921.5,568.6 924.6,573.6 926.5,576.5"/>
<polyline points="900.2,480.5 901.2,481.2"/>
<polyline points="640.5,627.8 645.5,632.8 650.5,629.0 656.1,639.0 660.5,640.2 663.6,644.6 673.6,647.1 674.9,656.5 676.8,659.0 681.8,660.0 685.5,658.4 688.0,655.0 691.8,655.0 691.8,661.5 695.5,666.5 701.8,672.5"/>
<polyline points="738.0,579.6 737.4,583.4 733.6,587.8 729.2,589.0 725.5,588.0 721.8,589.0 719.9,591.5 720.5,596.5 723.0,600.9 723.6,605.2 721.8,612.8 718.6,617.1 715.5,619.6 714.2,615.2 716.1,617.8 718.6,622.1"/>
<polyline points="715.5,619.6 713.0,622.8 709.9,627.1 712.4,628.4"/>
<polyline points="678.6,607.1 681.1,604.2 683.6,603.4 686.1,605.0"/>
<polyline points="696.8,606.5 698.6,608.4"/>
<polyline points="664.9,610.9 669.9,613.0 674.2,611.2"/>
<polyline points="725.2,647.8 722.4,652.8 718.6,654.0 715.5,657.8 713.0,665.2 716.8,672.5"/>
<polyline points="722.4,652.8 723.0,659.0 726.1,662.8 729.2,665.9"/>
<polyline points="862.2,646.8 864.1,649.0 864.8,647.8 868.5,649.0"/>
<polyline points="883.5,642.8 888.5,639.0 893.5,636.2 895.4,635.9"/>
<polyline points="872.9,662.8 872.9,664.0"/>
<polyline points="925.9,576.5 926.8,581.5 924.2,585.9 923.8,591.5 925.9,599.0 927.8,602.5 932.1,604.0 932.1,608.4"/>
<polyline points="921.5,622.8 923.0,626.5 925.2,627.1"/>
<polyline points="928.4,623.4 930.2,621.8"/>
<polyline points="934.0,621.8 937.1,622.5"/>
<polyline points="940.9,628.4 943.4,629.0"/>
<polyline points="900.9,631.2 905.2,630.9"/>
<polyline points="952.8,631.8 957.8,633.8 962.8,634.2 965.0,638.4 962.1,644.0 965.9,646.5 969.0,652.1 974.6,654.2"/>
<polyline points="977.8,645.2 979.6,642.8 984.0,645.0"/>
<polyline points="989.6,649.0 995.2,648.0 997.1,649.0 995.2,653.4 998.4,657.1 1002.8,659.0 1010.2,659.6 1016.5,662.8 1019.0,667.8"/>
<polyline points="702.4,672.5 705.5,676.9 710.5,675.0 714.2,675.6 716.8,672.5"/>
<polyline points="730.5,679.4 733.6,683.1 735.5,686.2 739.2,688.8 742.4,687.5 748.0,690.0 751.8,688.8 755.5,691.2 759.9,694.0 767.4,694.0"/>
<polyline points="765.5,705.0 768.0,702.5"/>
<polyline points="759.9,718.1 757.4,723.8 756.1,732.5 754.9,740.0"/>
<polyline points="764.2,746.0 768.5,746.0"/>
<polyline points="731.5,766.9 732.2,766.9"/>
<polyline points="875.8,677.5 881.0,682.5 885.4,684.4 891.0,691.2"/>
<polyline points="892.9,718.1 886.0,721.2 881.6,723.8 880.8,727.5 882.0,731.2"/>
<polyline points="869.5,741.2 872.2,744.0 877.2,741.9"/>
<polyline points="879.1,744.4 881.6,746.9 884.8,748.1 885.8,745.0"/>
<polyline points="768.5,746.0 772.2,745.0 777.2,745.6 778.5,738.8 782.2,737.5 786.0,740.6"/>
<polyline points="823.5,748.8 824.1,746.2 829.1,746.0"/>
<polyline points="844.8,750.2 849.8,747.5 854.8,745.6"/>
<polyline points="801.6,746.2 807.9,747.5 804.8,748.8 806.0,751.2 802.2,753.8 801.6,760.0 801.0,762.5 804.1,764.4 808.5,765.0 811.0,766.9"/>
<polyline points="801.2,760.6 803.5,760.6 803.8,763.1"/>
<polyline points="841.6,766.9 848.5,766.2 856.0,765.6 861.0,763.8 865.4,763.1 865.8,765.0 864.8,766.9"/>
<polyline points="768.5,701.2 769.0,701.8"/>
<polyline points="902.8,699.4 903.4,706.2 901.5,712.2"/>
<polyline points="904.0,702.5 909.0,706.2 915.2,709.8 921.5,708.8 926.5,705.6 929.6,701.9 931.5,697.5 934.0,696.0 941.5,696.0 947.1,698.8"/>
<polyline points="1013.4,681.9 1009.0,683.8 1006.5,688.8 1005.2,692.5 1000.2,696.2 994.0,700.6 989.0,701.9 985.2,700.0 982.1,701.5 979.6,704.4 978.4,706.9"/>
<polyline points="975.9,713.8 977.1,720.0 979.0,724.4 981.5,725.6"/>
<polyline points="984.0,730.2 985.9,729.4 989.0,731.2 994.0,736.2 998.4,740.0 1006.5,739.4 1015.2,740.0 1021.5,737.5 1023.4,733.8 1023.4,728.8"/>
<polyline points="980.2,740.0 976.5,741.2 972.1,740.6 969.6,740.0 967.8,741.9 970.2,743.5 972.1,744.4 971.5,748.8 967.8,752.5 965.9,756.9 967.8,765.0 962.1,766.0 962.1,767.5"/>
<polyline points="1021.5,676.0 1024.5,676.0"/>
</g>
<path class="x" d="M97 242.5H108 M102.5 237V248"/>
<path class="x" d="M97 463.5H108 M102.5 458V469"/>
<path class="x" d="M97 658.5H108 M102.5 653V664"/>
<path class="x" d="M334 242.5H345 M339.5 237V248"/>
<path class="x" d="M334 463.5H345 M339.5 458V469"/>
<path class="x" d="M334 658.5H345 M339.5 653V664"/>
<path class="x" d="M571 242.5H582 M576.5 237V248"/>
<path class="x" d="M571 463.5H582 M576.5 458V469"/>
<path class="x" d="M571 658.5H582 M576.5 653V664"/>
<text class="l" x="91.5" y="27.0">20W</text>
<text class="l" x="328.5" y="27.0">10W</text>
<text class="l" x="574.5" y="27.0">0</text>
<text class="l" x="805.0" y="27.0">10E</text>
<text class="l" x="7.5" y="246.0">60N</text>
<text class="l" x="8.0" y="467.0">55N</text>
<text class="l" x="8.0" y="662.0">50N</text>
<rect x="2" y="2" width="498" height="13" fill="#fff"/>
<text class="h" x="2.4" y="13" textLength="23.2" lengthAdjust="spacingAndGlyphs">FRE</text>
<text class="h" x="30.6" y="13" textLength="49.4" lengthAdjust="spacingAndGlyphs">09.11.07</text>
<text class="h" x="84.4" y="13" textLength="31.2" lengthAdjust="spacingAndGlyphs">18:00</text>
<text class="h" x="120.7" y="13" textLength="24.4" lengthAdjust="spacingAndGlyphs">UTC</text>
<text class="h" x="153.2" y="13" textLength="128.4" lengthAdjust="spacingAndGlyphs">Bodenwettermeldungen</text>
<text class="h" x="287.9" y="13">:</text>
<text class="h" x="301.6" y="13" textLength="56.2" lengthAdjust="spacingAndGlyphs">Max.B&#246;en</text>
<text class="h" x="361.6" y="13" textLength="32.5" lengthAdjust="spacingAndGlyphs">(letzte</text>
<text class="h" x="400.4" y="13">6</text>
<text class="h" x="411.6" y="13" textLength="50.0" lengthAdjust="spacingAndGlyphs">Stunden)</text>
<text class="h" x="466.4" y="13">/</text>
<text class="h" x="476.6" y="13" textLength="22.9" lengthAdjust="spacingAndGlyphs">kmh</text>
<g class="n">
<rect x="764.5" y="759.2" width="15.0" height="12.5"/><text x="765.1" y="769.6" fill="#ff1478" stroke="#ff1478">80</text>
<rect x="784.5" y="758.6" width="15.0" height="12.5"/><text x="785.1" y="769.0" fill="#ff1478" stroke="#ff1478">72</text>
<rect x="876.0" y="757.6" width="15.0" height="12.5"/><text x="876.6" y="768.0" fill="#ff0000" stroke="#ff0000">96</text>
<rect x="732.1" y="754.9" width="22.0" height="12.5"/><text x="732.7" y="765.3" fill="#ff0000" stroke="#ff0000">144</text>
<rect x="811.0" y="754.5" width="15.0" height="12.5"/><text x="811.6" y="764.9" fill="#ff1478" stroke="#ff1478">87</text>
<rect x="895.0" y="754.2" width="15.0" height="12.5"/><text x="895.6" y="764.6" fill="#ffff00" stroke="#ffff00">50</text>
<rect x="935.0" y="752.4" width="15.0" height="12.5"/><text x="935.6" y="762.8" fill="#ff1478" stroke="#ff1478">65</text>
<rect x="777.0" y="746.5" width="22.0" height="12.5"/><text x="777.6" y="756.9" fill="#ff0000" stroke="#ff0000">126</text>
<rect x="732.8" y="744.5" width="15.0" height="12.5"/><text x="733.4" y="754.9" fill="#ffff00" stroke="#ffff00">54</text>
<rect x="829.1" y="744.5" width="15.0" height="12.5"/><text x="829.7" y="754.9" fill="#ff1478" stroke="#ff1478">76</text>
<rect x="862.0" y="744.5" width="15.0" height="12.5"/><text x="862.6" y="754.9" fill="#ff1478" stroke="#ff1478">72</text>
<rect x="891.9" y="744.5" width="15.0" height="12.5"/><text x="892.5" y="754.9" fill="#ff1478" stroke="#ff1478">69</text>
<rect x="808.0" y="743.6" width="15.0" height="12.5"/><text x="808.6" y="754.0" fill="#ffff00" stroke="#ffff00">46</text>
<rect x="749.0" y="740.5" width="15.0" height="12.5"/><text x="749.6" y="750.9" fill="#ff1478" stroke="#ff1478">69</text>
<rect x="786.0" y="735.5" width="15.0" height="12.5"/><text x="786.6" y="745.9" fill="#ffff00" stroke="#ffff00">46</text>
<rect x="854.1" y="734.5" width="15.0" height="12.5"/><text x="854.7" y="744.9" fill="#ff0000" stroke="#ff0000">94</text>
<rect x="465.0" y="732.0" width="15.0" height="12.5"/><text x="465.6" y="742.4" fill="#00ffff" stroke="#00ffff">31</text>
<rect x="831.1" y="731.8" width="15.0" height="12.5"/><text x="831.7" y="742.1" fill="#ff1478" stroke="#ff1478">72</text>
<rect x="877.0" y="731.5" width="15.0" height="12.5"/><text x="877.6" y="741.9" fill="#ff1478" stroke="#ff1478">80</text>
<rect x="931.0" y="731.1" width="15.0" height="12.5"/><text x="931.6" y="741.5" fill="#ff0000" stroke="#ff0000">91</text>
<rect x="891.9" y="730.5" width="22.0" height="12.5"/><text x="892.5" y="740.9" fill="#ff0000" stroke="#ff0000">119</text>
<rect x="945.0" y="730.5" width="22.0" height="12.5"/><text x="945.6" y="740.9" fill="#ff0000" stroke="#ff0000">100</text>
<rect x="757.8" y="728.6" width="15.0" height="12.5"/><text x="758.4" y="739.0" fill="#ff1478" stroke="#ff1478">83</text>
<rect x="968.1" y="726.5" width="15.0" height="12.5"/><text x="968.7" y="736.9" fill="#ffff00" stroke="#ffff00">61</text>
<rect x="602.2" y="721.5" width="15.0" height="12.5"/><text x="602.9" y="731.9" fill="#ffff00" stroke="#ffff00">43</text>
<rect x="827.0" y="721.5" width="15.0" height="12.5"/><text x="827.6" y="731.9" fill="#ffff00" stroke="#ffff00">50</text>
<rect x="775.8" y="720.5" width="15.0" height="12.5"/><text x="776.4" y="730.9" fill="#ffff00" stroke="#ffff00">54</text>
<rect x="891.9" y="720.5" width="15.0" height="12.5"/><text x="892.5" y="730.9" fill="#ff1478" stroke="#ff1478">83</text>
<rect x="865.8" y="714.5" width="15.0" height="12.5"/><text x="866.4" y="724.9" fill="#ff1478" stroke="#ff1478">72</text>
<rect x="951.0" y="713.6" width="15.0" height="12.5"/><text x="951.6" y="724.0" fill="#ff1478" stroke="#ff1478">87</text>
<rect x="932.1" y="712.4" width="15.0" height="12.5"/><text x="932.7" y="722.8" fill="#ff1478" stroke="#ff1478">76</text>
<rect x="848.0" y="711.5" width="15.0" height="12.5"/><text x="848.6" y="721.9" fill="#ff1478" stroke="#ff1478">65</text>
<rect x="804.9" y="710.5" width="15.0" height="12.5"/><text x="805.5" y="720.9" fill="#ffff00" stroke="#ffff00">54</text>
<rect x="768.2" y="708.6" width="15.0" height="12.5"/><text x="768.9" y="719.0" fill="#ff1478" stroke="#ff1478">72</text>
<rect x="828.0" y="708.6" width="15.0" height="12.5"/><text x="828.6" y="719.0" fill="#ffff00" stroke="#ffff00">50</text>
<rect x="750.0" y="704.5" width="15.0" height="12.5"/><text x="750.6" y="714.9" fill="#00ffff" stroke="#00ffff">39</text>
<rect x="885.1" y="704.5" width="15.0" height="12.5"/><text x="885.7" y="714.9" fill="#ff1478" stroke="#ff1478">65</text>
<rect x="710.0" y="703.6" width="15.0" height="12.5"/><text x="710.6" y="714.0" fill="#ff1478" stroke="#ff1478">87</text>
<rect x="684.9" y="701.5" width="15.0" height="12.5"/><text x="685.5" y="711.9" fill="#ffff00" stroke="#ffff00">50</text>
<rect x="962.8" y="700.5" width="15.0" height="12.5"/><text x="963.4" y="710.9" fill="#ffff00" stroke="#ffff00">54</text>
<rect x="803.2" y="700.2" width="15.0" height="12.5"/><text x="803.9" y="710.6" fill="#ff1478" stroke="#ff1478">72</text>
<rect x="841.8" y="698.2" width="15.0" height="12.5"/><text x="842.4" y="708.6" fill="#ffff00" stroke="#ffff00">57</text>
<rect x="822.0" y="696.5" width="15.0" height="12.5"/><text x="822.6" y="706.9" fill="#ff1478" stroke="#ff1478">65</text>
<rect x="946.9" y="696.5" width="15.0" height="12.5"/><text x="947.5" y="706.9" fill="#ff1478" stroke="#ff1478">69</text>
<rect x="624.0" y="695.2" width="15.0" height="12.5"/><text x="624.6" y="705.6" fill="#00ffff" stroke="#00ffff">35</text>
<rect x="787.0" y="694.5" width="15.0" height="12.5"/><text x="787.6" y="704.9" fill="#ffff00" stroke="#ffff00">54</text>
<rect x="767.0" y="687.6" width="15.0" height="12.5"/><text x="767.6" y="698.0" fill="#ffff00" stroke="#ffff00">50</text>
<rect x="854.9" y="686.5" width="15.0" height="12.5"/><text x="855.5" y="696.9" fill="#ffff00" stroke="#ffff00">57</text>
<rect x="891.4" y="686.5" width="15.0" height="12.5"/><text x="892.0" y="696.9" fill="#ff1478" stroke="#ff1478">72</text>
<rect x="714.0" y="685.5" width="15.0" height="12.5"/><text x="714.6" y="695.9" fill="#ff0000" stroke="#ff0000">91</text>
<rect x="951.2" y="684.5" width="15.0" height="12.5"/><text x="951.9" y="694.9" fill="#ff1478" stroke="#ff1478">72</text>
<rect x="907.9" y="681.5" width="15.0" height="12.5"/><text x="908.5" y="691.9" fill="#ffff00" stroke="#ffff00">54</text>
<rect x="935.0" y="681.5" width="15.0" height="12.5"/><text x="935.6" y="691.9" fill="#ffff00" stroke="#ffff00">61</text>
<rect x="793.9" y="680.5" width="15.0" height="12.5"/><text x="794.5" y="690.9" fill="#ffff00" stroke="#ffff00">54</text>
<rect x="832.0" y="680.5" width="15.0" height="12.5"/><text x="832.6" y="690.9" fill="#ffff00" stroke="#ffff00">46</text>
<rect x="664.0" y="677.6" width="15.0" height="12.5"/><text x="664.6" y="688.0" fill="#ffff00" stroke="#ffff00">43</text>
<rect x="985.0" y="677.6" width="15.0" height="12.5"/><text x="985.6" y="688.0" fill="#ffff00" stroke="#ffff00">43</text>
<rect x="761.2" y="674.2" width="15.0" height="12.5"/><text x="761.9" y="684.6" fill="#ff1478" stroke="#ff1478">80</text>
<rect x="850.8" y="672.4" width="15.0" height="12.5"/><text x="851.4" y="682.8" fill="#ffff00" stroke="#ffff00">54</text>
<rect x="735.9" y="671.5" width="15.0" height="12.5"/><text x="736.5" y="681.9" fill="#ffff00" stroke="#ffff00">54</text>
<rect x="897.2" y="671.5" width="15.0" height="12.5"/><text x="897.9" y="681.9" fill="#ff1478" stroke="#ff1478">72</text>
<rect x="569.8" y="670.8" width="15.0" height="12.5"/><text x="570.4" y="681.1" fill="#ffff00" stroke="#ffff00">50</text>
<rect x="831.1" y="670.5" width="15.0" height="12.5"/><text x="831.7" y="680.9" fill="#ffff00" stroke="#ffff00">57</text>
<rect x="1006.2" y="668.2" width="15.0" height="12.5"/><text x="1006.9" y="678.6" fill="#ffff00" stroke="#ffff00">61</text>
<rect x="928.1" y="667.6" width="15.0" height="12.5"/><text x="928.7" y="678.0" fill="#ffff00" stroke="#ffff00">46</text>
<rect x="715.9" y="666.8" width="15.0" height="12.5"/><text x="716.5" y="677.1" fill="#ffff00" stroke="#ffff00">50</text>
<rect x="969.8" y="664.8" width="15.0" height="12.5"/><text x="970.4" y="675.1" fill="#ffff00" stroke="#ffff00">61</text>
<rect x="773.0" y="664.5" width="15.0" height="12.5"/><text x="773.6" y="674.9" fill="#ffff00" stroke="#ffff00">50</text>
<rect x="869.5" y="663.9" width="15.0" height="12.5"/><text x="870.1" y="674.3" fill="#ff1478" stroke="#ff1478">76</text>
<rect x="950.6" y="662.0" width="15.0" height="12.5"/><text x="951.2" y="672.4" fill="#ff1478" stroke="#ff1478">76</text>
<rect x="885.8" y="660.8" width="15.0" height="12.5"/><text x="886.4" y="671.1" fill="#ff1478" stroke="#ff1478">65</text>
<rect x="804.9" y="660.5" width="15.0" height="12.5"/><text x="805.5" y="670.9" fill="#ffff00" stroke="#ffff00">57</text>
<rect x="594.8" y="654.5" width="15.0" height="12.5"/><text x="595.4" y="664.9" fill="#ffff00" stroke="#ffff00">61</text>
<rect x="740.9" y="653.5" width="15.0" height="12.5"/><text x="741.5" y="663.9" fill="#ffff00" stroke="#ffff00">57</text>
<rect x="941.9" y="651.6" width="15.0" height="12.5"/><text x="942.5" y="662.0" fill="#ffff00" stroke="#ffff00">57</text>
<rect x="697.1" y="650.8" width="15.0" height="12.5"/><text x="697.7" y="661.1" fill="#ffff00" stroke="#ffff00">46</text>
<rect x="863.0" y="649.5" width="15.0" height="12.5"/><text x="863.6" y="659.9" fill="#ffff00" stroke="#ffff00">54</text>
<rect x="906.0" y="648.5" width="15.0" height="12.5"/><text x="906.6" y="658.9" fill="#ff1478" stroke="#ff1478">65</text>
<rect x="974.0" y="645.5" width="15.0" height="12.5"/><text x="974.6" y="655.9" fill="#ff1478" stroke="#ff1478">87</text>
<rect x="768.9" y="644.5" width="15.0" height="12.5"/><text x="769.5" y="654.9" fill="#ffff00" stroke="#ffff00">57</text>
<rect x="808.0" y="644.5" width="15.0" height="12.5"/><text x="808.6" y="654.9" fill="#ffff00" stroke="#ffff00">54</text>
<rect x="731.8" y="639.5" width="15.0" height="12.5"/><text x="732.4" y="649.9" fill="#ffff00" stroke="#ffff00">54</text>
<rect x="749.0" y="636.6" width="15.0" height="12.5"/><text x="749.6" y="647.0" fill="#ffff00" stroke="#ffff00">61</text>
<rect x="868.0" y="636.6" width="15.0" height="12.5"/><text x="868.6" y="647.0" fill="#ffff00" stroke="#ffff00">57</text>
<rect x="674.0" y="634.8" width="15.0" height="12.5"/><text x="674.6" y="645.1" fill="#ffff00" stroke="#ffff00">43</text>
<rect x="715.2" y="634.5" width="15.0" height="12.5"/><text x="715.9" y="644.9" fill="#ffff00" stroke="#ffff00">46</text>
<rect x="833.0" y="633.2" width="15.0" height="12.5"/><text x="833.6" y="643.6" fill="#ff1478" stroke="#ff1478">65</text>
<rect x="511.0" y="632.5" width="15.0" height="12.5"/><text x="511.6" y="642.9" fill="#ffff00" stroke="#ffff00">48</text>
<rect x="895.6" y="631.6" width="22.0" height="12.5"/><text x="896.2" y="642.0" fill="#ff0000" stroke="#ff0000">107</text>
<rect x="815.1" y="631.4" width="15.0" height="12.5"/><text x="815.7" y="641.8" fill="#ff1478" stroke="#ff1478">76</text>
<rect x="848.9" y="631.4" width="15.0" height="12.5"/><text x="849.5" y="641.8" fill="#ff1478" stroke="#ff1478">69</text>
<rect x="774.9" y="630.5" width="15.0" height="12.5"/><text x="775.5" y="640.9" fill="#ffff00" stroke="#ffff00">57</text>
<rect x="994.0" y="627.6" width="15.0" height="12.5"/><text x="994.6" y="638.0" fill="#ffff00" stroke="#ffff00">46</text>
<rect x="925.0" y="623.5" width="15.0" height="12.5"/><text x="925.6" y="633.9" fill="#ffff00" stroke="#ffff00">46</text>
<rect x="672.1" y="622.6" width="15.0" height="12.5"/><text x="672.7" y="633.0" fill="#ffff00" stroke="#ffff00">61</text>
<rect x="712.8" y="622.6" width="15.0" height="12.5"/><text x="713.4" y="633.0" fill="#ffff00" stroke="#ffff00">50</text>
<rect x="874.2" y="622.4" width="15.0" height="12.5"/><text x="874.9" y="632.8" fill="#ff1478" stroke="#ff1478">76</text>
<rect x="798.9" y="620.5" width="15.0" height="12.5"/><text x="799.5" y="630.9" fill="#ffff00" stroke="#ffff00">50</text>
<rect x="739.0" y="619.5" width="15.0" height="12.5"/><text x="739.6" y="629.9" fill="#ffff00" stroke="#ffff00">61</text>
<rect x="856.0" y="619.5" width="15.0" height="12.5"/><text x="856.6" y="629.9" fill="#ff1478" stroke="#ff1478">80</text>
<rect x="942.9" y="618.5" width="15.0" height="12.5"/><text x="943.5" y="628.9" fill="#ffff00" stroke="#ffff00">50</text>
<rect x="655.9" y="617.6" width="15.0" height="12.5"/><text x="656.5" y="628.0" fill="#ffff00" stroke="#ffff00">57</text>
<rect x="906.0" y="617.6" width="15.0" height="12.5"/><text x="906.6" y="628.0" fill="#ff1478" stroke="#ff1478">69</text>
<rect x="828.9" y="615.5" width="15.0" height="12.5"/><text x="829.5" y="625.9" fill="#ffff00" stroke="#ffff00">61</text>
<rect x="624.0" y="612.5" width="15.0" height="12.5"/><text x="624.6" y="622.9" fill="#ffff00" stroke="#ffff00">61</text>
<rect x="968.8" y="611.6" width="15.0" height="12.5"/><text x="969.4" y="622.0" fill="#ffff00" stroke="#ffff00">54</text>
<rect x="788.9" y="610.5" width="15.0" height="12.5"/><text x="789.5" y="620.9" fill="#ffff00" stroke="#ffff00">54</text>
<rect x="697.8" y="608.5" width="15.0" height="12.5"/><text x="698.4" y="618.9" fill="#ffff00" stroke="#ffff00">50</text>
<rect x="922.8" y="608.5" width="15.0" height="12.5"/><text x="923.4" y="618.9" fill="#ff1478" stroke="#ff1478">65</text>
<rect x="675.0" y="607.6" width="15.0" height="12.5"/><text x="675.6" y="618.0" fill="#ff1478" stroke="#ff1478">69</text>
<rect x="952.9" y="607.6" width="15.0" height="12.5"/><text x="953.5" y="618.0" fill="#ffff00" stroke="#ffff00">61</text>
<rect x="770.5" y="607.2" width="15.0" height="12.5"/><text x="771.1" y="617.6" fill="#ff1478" stroke="#ff1478">76</text>
<rect x="1009.0" y="606.6" width="15.0" height="12.5"/><text x="1009.6" y="617.0" fill="#00ffff" stroke="#00ffff">35</text>
<rect x="750.0" y="605.5" width="15.0" height="12.5"/><text x="750.6" y="615.9" fill="#ffff00" stroke="#ffff00">50</text>
<rect x="729.0" y="603.5" width="15.0" height="12.5"/><text x="729.6" y="613.9" fill="#ffff00" stroke="#ffff00">61</text>
<rect x="879.2" y="603.5" width="15.0" height="12.5"/><text x="879.9" y="613.9" fill="#ff1478" stroke="#ff1478">72</text>
<rect x="649.0" y="600.5" width="15.0" height="12.5"/><text x="649.6" y="610.9" fill="#ff1478" stroke="#ff1478">80</text>
<rect x="837.0" y="600.5" width="15.0" height="12.5"/><text x="837.6" y="610.9" fill="#ff1478" stroke="#ff1478">69</text>
<rect x="812.9" y="599.5" width="15.0" height="12.5"/><text x="813.5" y="609.9" fill="#ff1478" stroke="#ff1478">69</text>
<rect x="859.5" y="599.5" width="15.0" height="12.5"/><text x="860.1" y="609.9" fill="#ff1478" stroke="#ff1478">72</text>
<rect x="785.1" y="595.5" width="15.0" height="12.5"/><text x="785.7" y="605.9" fill="#ff1478" stroke="#ff1478">69</text>
<rect x="685.9" y="593.5" width="15.0" height="12.5"/><text x="686.5" y="603.9" fill="#ffff00" stroke="#ffff00">61</text>
<rect x="755.9" y="592.6" width="15.0" height="12.5"/><text x="756.5" y="603.0" fill="#ffff00" stroke="#ffff00">54</text>
<rect x="890.8" y="590.8" width="15.0" height="12.5"/><text x="891.4" y="601.1" fill="#ff1478" stroke="#ff1478">65</text>
<rect x="657.1" y="590.5" width="15.0" height="12.5"/><text x="657.7" y="600.9" fill="#ff1478" stroke="#ff1478">87</text>
<rect x="704.0" y="590.5" width="15.0" height="12.5"/><text x="704.6" y="600.9" fill="#ffff00" stroke="#ffff00">50</text>
<rect x="778.0" y="585.5" width="15.0" height="12.5"/><text x="778.6" y="595.9" fill="#ffff00" stroke="#ffff00">54</text>
<rect x="907.9" y="585.5" width="15.0" height="12.5"/><text x="908.5" y="595.9" fill="#ffff00" stroke="#ffff00">57</text>
<rect x="996.9" y="585.5" width="15.0" height="12.5"/><text x="997.5" y="595.9" fill="#ffff00" stroke="#ffff00">50</text>
<rect x="816.0" y="584.8" width="22.0" height="12.5"/><text x="816.6" y="595.1" fill="#ff0000" stroke="#ff0000">119</text>
<rect x="961.0" y="583.5" width="15.0" height="12.5"/><text x="961.6" y="593.9" fill="#ffff00" stroke="#ffff00">57</text>
<rect x="936.9" y="579.5" width="15.0" height="12.5"/><text x="937.5" y="589.9" fill="#ffff00" stroke="#ffff00">57</text>
<rect x="685.9" y="578.5" width="15.0" height="12.5"/><text x="686.5" y="588.9" fill="#ff1478" stroke="#ff1478">69</text>
<rect x="665.9" y="577.2" width="15.0" height="12.5"/><text x="666.5" y="587.6" fill="#ff1478" stroke="#ff1478">87</text>
<rect x="647.1" y="576.8" width="15.0" height="12.5"/><text x="647.7" y="587.1" fill="#ff1478" stroke="#ff1478">83</text>
<rect x="707.8" y="574.5" width="15.0" height="12.5"/><text x="708.4" y="584.9" fill="#ff1478" stroke="#ff1478">65</text>
<rect x="776.0" y="572.5" width="15.0" height="12.5"/><text x="776.6" y="582.9" fill="#ffff00" stroke="#ffff00">61</text>
<rect x="865.1" y="572.2" width="15.0" height="12.5"/><text x="865.7" y="582.6" fill="#ff1478" stroke="#ff1478">72</text>
<rect x="460.8" y="571.2" width="15.0" height="12.5"/><text x="461.4" y="581.6" fill="#ffff00" stroke="#ffff00">57</text>
<rect x="834.5" y="570.2" width="15.0" height="12.5"/><text x="835.1" y="580.6" fill="#ff1478" stroke="#ff1478">83</text>
<rect x="1011.2" y="569.5" width="15.0" height="12.5"/><text x="1011.9" y="579.9" fill="#ffff00" stroke="#ffff00">50</text>
<rect x="903.1" y="568.8" width="15.0" height="12.5"/><text x="903.7" y="579.1" fill="#ff1478" stroke="#ff1478">87</text>
<rect x="760.0" y="567.2" width="15.0" height="12.5"/><text x="760.6" y="577.6" fill="#ff1478" stroke="#ff1478">69</text>
<rect x="732.1" y="566.6" width="15.0" height="12.5"/><text x="732.7" y="577.0" fill="#ffff00" stroke="#ffff00">61</text>
<rect x="816.1" y="565.4" width="15.0" height="12.5"/><text x="816.7" y="575.8" fill="#ff1478" stroke="#ff1478">72</text>
<rect x="856.8" y="561.4" width="15.0" height="12.5"/><text x="857.4" y="571.8" fill="#ff1478" stroke="#ff1478">65</text>
<rect x="878.2" y="561.4" width="15.0" height="12.5"/><text x="878.9" y="571.8" fill="#ff1478" stroke="#ff1478">76</text>
<rect x="700.2" y="559.5" width="15.0" height="12.5"/><text x="700.9" y="569.9" fill="#ff1478" stroke="#ff1478">72</text>
<rect x="676.9" y="558.5" width="15.0" height="12.5"/><text x="677.5" y="568.9" fill="#ff0000" stroke="#ff0000">96</text>
<rect x="798.0" y="558.5" width="15.0" height="12.5"/><text x="798.6" y="568.9" fill="#ff1478" stroke="#ff1478">83</text>
<rect x="742.1" y="556.6" width="15.0" height="12.5"/><text x="742.7" y="567.0" fill="#ff1478" stroke="#ff1478">72</text>
<rect x="838.9" y="556.6" width="15.0" height="12.5"/><text x="839.5" y="567.0" fill="#ff1478" stroke="#ff1478">65</text>
<rect x="913.8" y="555.4" width="15.0" height="12.5"/><text x="914.4" y="565.8" fill="#ffff00" stroke="#ffff00">61</text>
<rect x="767.0" y="554.1" width="15.0" height="12.5"/><text x="767.6" y="564.5" fill="#ffff00" stroke="#ffff00">57</text>
<rect x="723.4" y="548.2" width="15.0" height="12.5"/><text x="724.0" y="558.6" fill="#ff1478" stroke="#ff1478">72</text>
<rect x="931.0" y="547.6" width="15.0" height="12.5"/><text x="931.6" y="558.0" fill="#ffff00" stroke="#ffff00">54</text>
<rect x="695.9" y="542.6" width="15.0" height="12.5"/><text x="696.5" y="553.0" fill="#ff1478" stroke="#ff1478">87</text>
<rect x="847.0" y="541.4" width="15.0" height="12.5"/><text x="847.6" y="551.8" fill="#ff1478" stroke="#ff1478">65</text>
<rect x="863.0" y="540.4" width="15.0" height="12.5"/><text x="863.6" y="550.8" fill="#ff1478" stroke="#ff1478">69</text>
<rect x="802.0" y="537.6" width="15.0" height="12.5"/><text x="802.6" y="548.0" fill="#ffff00" stroke="#ffff00">57</text>
<rect x="900.0" y="536.6" width="15.0" height="12.5"/><text x="900.6" y="547.0" fill="#ff1478" stroke="#ff1478">65</text>
<rect x="966.2" y="532.5" width="15.0" height="12.5"/><text x="966.9" y="542.9" fill="#ffff00" stroke="#ffff00">43</text>
<rect x="762.1" y="530.4" width="15.0" height="12.5"/><text x="762.7" y="540.8" fill="#ff1478" stroke="#ff1478">76</text>
<rect x="645.0" y="529.5" width="15.0" height="12.5"/><text x="645.6" y="539.9" fill="#ff1478" stroke="#ff1478">80</text>
<rect x="738.0" y="529.5" width="15.0" height="12.5"/><text x="738.6" y="539.9" fill="#ff0000" stroke="#ff0000">91</text>
<rect x="460.8" y="528.8" width="15.0" height="12.5"/><text x="461.4" y="539.1" fill="#ffff00" stroke="#ffff00">54</text>
<rect x="852.0" y="525.4" width="15.0" height="12.5"/><text x="852.6" y="535.8" fill="#ffff00" stroke="#ffff00">57</text>
<rect x="899.0" y="525.4" width="15.0" height="12.5"/><text x="899.6" y="535.8" fill="#ffff00" stroke="#ffff00">57</text>
<rect x="822.0" y="522.5" width="15.0" height="12.5"/><text x="822.6" y="532.9" fill="#ff1478" stroke="#ff1478">65</text>
<rect x="915.0" y="522.5" width="15.0" height="12.5"/><text x="915.6" y="532.9" fill="#ffff00" stroke="#ffff00">61</text>
<rect x="695.9" y="522.2" width="15.0" height="12.5"/><text x="696.5" y="532.6" fill="#ff1478" stroke="#ff1478">87</text>
<rect x="712.1" y="521.6" width="22.0" height="12.5"/><text x="712.7" y="532.0" fill="#ff0000" stroke="#ff0000">104</text>
<rect x="495.5" y="518.8" width="15.0" height="12.5"/><text x="496.1" y="529.1" fill="#ffff00" stroke="#ffff00">61</text>
<rect x="749.6" y="516.6" width="15.0" height="12.5"/><text x="750.2" y="527.0" fill="#ff1478" stroke="#ff1478">83</text>
<rect x="766.5" y="516.6" width="22.0" height="12.5"/><text x="767.1" y="527.0" fill="#ff0000" stroke="#ff0000">100</text>
<rect x="855.1" y="514.5" width="15.0" height="12.5"/><text x="855.7" y="524.9" fill="#ff1478" stroke="#ff1478">72</text>
<rect x="883.9" y="514.5" width="15.0" height="12.5"/><text x="884.5" y="524.9" fill="#ffff00" stroke="#ffff00">54</text>
<rect x="804.9" y="512.5" width="15.0" height="12.5"/><text x="805.5" y="522.9" fill="#ff1478" stroke="#ff1478">69</text>
<rect x="838.9" y="512.5" width="15.0" height="12.5"/><text x="839.5" y="522.9" fill="#ff1478" stroke="#ff1478">65</text>
<rect x="934.0" y="507.5" width="15.0" height="12.5"/><text x="934.6" y="517.9" fill="#ffff00" stroke="#ffff00">50</text>
<rect x="757.8" y="503.5" width="22.0" height="12.5"/><text x="758.4" y="513.9" fill="#ff0000" stroke="#ff0000">130</text>
<rect x="906.0" y="501.6" width="15.0" height="12.5"/><text x="906.6" y="512.0" fill="#ff1478" stroke="#ff1478">65</text>
<rect x="833.9" y="498.5" width="15.0" height="12.5"/><text x="834.5" y="508.9" fill="#ff1478" stroke="#ff1478">83</text>
<rect x="782.0" y="495.6" width="15.0" height="12.5"/><text x="782.6" y="506.0" fill="#ff1478" stroke="#ff1478">87</text>
<rect x="459.2" y="494.5" width="15.0" height="12.5"/><text x="459.9" y="504.9" fill="#ffff00" stroke="#ffff00">46</text>
<rect x="715.2" y="491.6" width="22.0" height="12.5"/><text x="715.9" y="502.0" fill="#ff0000" stroke="#ff0000">104</text>
<rect x="813.9" y="491.6" width="15.0" height="12.5"/><text x="814.5" y="502.0" fill="#ffff00" stroke="#ffff00">54</text>
<rect x="740.9" y="490.8" width="22.0" height="12.5"/><text x="741.5" y="501.1" fill="#ff0000" stroke="#ff0000">115</text>
<rect x="937.9" y="490.6" width="15.0" height="12.5"/><text x="938.5" y="501.0" fill="#ff0000" stroke="#ff0000">94</text>
<rect x="854.9" y="490.4" width="15.0" height="12.5"/><text x="855.5" y="500.8" fill="#ff1478" stroke="#ff1478">87</text>
<rect x="899.0" y="487.5" width="15.0" height="12.5"/><text x="899.6" y="497.9" fill="#ff0000" stroke="#ff0000">96</text>
<rect x="773.0" y="484.8" width="15.0" height="12.5"/><text x="773.6" y="495.1" fill="#ff0000" stroke="#ff0000">91</text>
<rect x="811.4" y="477.0" width="15.0" height="12.5"/><text x="812.0" y="487.4" fill="#ff1478" stroke="#ff1478">87</text>
<rect x="794.8" y="476.2" width="15.0" height="12.5"/><text x="795.4" y="486.6" fill="#ff1478" stroke="#ff1478">65</text>
<rect x="830.8" y="476.0" width="15.0" height="12.5"/><text x="831.4" y="486.4" fill="#ff1478" stroke="#ff1478">83</text>
<rect x="547.8" y="475.5" width="15.0" height="12.5"/><text x="548.4" y="485.9" fill="#ffff00" stroke="#ffff00">50</text>
<rect x="851.8" y="475.5" width="15.0" height="12.5"/><text x="852.4" y="485.9" fill="#ff1478" stroke="#ff1478">65</text>
<rect x="968.0" y="474.5" width="15.0" height="12.5"/><text x="968.6" y="484.9" fill="#ffff00" stroke="#ffff00">46</text>
<rect x="1015.0" y="473.5" width="15.0" height="12.5"/><text x="1015.6" y="483.9" fill="#ffff00" stroke="#ffff00">46</text>
<rect x="883.2" y="470.7" width="22.0" height="12.5"/><text x="883.9" y="481.1" fill="#ff0000" stroke="#ff0000">107</text>
<rect x="793.9" y="464.4" width="15.0" height="12.5"/><text x="794.5" y="474.8" fill="#ff1478" stroke="#ff1478">69</text>
<rect x="837.0" y="464.4" width="15.0" height="12.5"/><text x="837.6" y="474.8" fill="#ff1478" stroke="#ff1478">81</text>
<rect x="680.9" y="463.5" width="15.0" height="12.5"/><text x="681.5" y="473.9" fill="#ff0000" stroke="#ff0000">94</text>
<rect x="764.2" y="456.5" width="22.0" height="12.5"/><text x="764.9" y="466.9" fill="#ff0000" stroke="#ff0000">111</text>
<rect x="818.9" y="456.5" width="15.0" height="12.5"/><text x="819.5" y="466.9" fill="#ffff00" stroke="#ffff00">56</text>
<rect x="507.5" y="455.0" width="15.0" height="12.5"/><text x="508.1" y="465.4" fill="#ffff00" stroke="#ffff00">46</text>
<rect x="403.0" y="454.5" width="15.0" height="12.5"/><text x="403.6" y="464.9" fill="#ffff00" stroke="#ffff00">59</text>
<rect x="918.1" y="454.1" width="15.0" height="12.5"/><text x="918.7" y="464.5" fill="#ff1478" stroke="#ff1478">83</text>
<rect x="803.0" y="446.6" width="15.0" height="12.5"/><text x="803.6" y="457.0" fill="#ff1478" stroke="#ff1478">69</text>
<rect x="837.0" y="446.6" width="15.0" height="12.5"/><text x="837.6" y="457.0" fill="#ff1478" stroke="#ff1478">67</text>
<rect x="919.0" y="444.8" width="15.0" height="12.5"/><text x="919.6" y="455.1" fill="#ff1478" stroke="#ff1478">80</text>
<rect x="395.0" y="442.5" width="15.0" height="12.5"/><text x="395.6" y="452.9" fill="#ff1478" stroke="#ff1478">69</text>
<rect x="433.8" y="439.5" width="15.0" height="12.5"/><text x="434.4" y="449.9" fill="#ff1478" stroke="#ff1478">67</text>
<rect x="869.8" y="435.6" width="15.0" height="12.5"/><text x="870.4" y="446.0" fill="#ff1478" stroke="#ff1478">85</text>
<rect x="756.1" y="434.8" width="22.0" height="12.5"/><text x="756.7" y="445.1" fill="#ff0000" stroke="#ff0000">109</text>
<rect x="469.2" y="432.5" width="15.0" height="12.5"/><text x="469.9" y="442.9" fill="#ffff00" stroke="#ffff00">52</text>
<rect x="421.2" y="428.8" width="15.0" height="12.5"/><text x="421.9" y="439.1" fill="#ffff00" stroke="#ffff00">59</text>
<rect x="785.8" y="426.2" width="15.0" height="12.5"/><text x="786.4" y="436.6" fill="#ff1478" stroke="#ff1478">67</text>
<rect x="865.8" y="425.6" width="15.0" height="12.5"/><text x="866.4" y="436.0" fill="#ff1478" stroke="#ff1478">69</text>
<rect x="825.8" y="425.4" width="15.0" height="12.5"/><text x="826.4" y="435.8" fill="#ff1478" stroke="#ff1478">87</text>
<rect x="461.2" y="420.0" width="15.0" height="12.5"/><text x="461.9" y="430.4" fill="#ffff00" stroke="#ffff00">46</text>
<rect x="762.0" y="415.6" width="15.0" height="12.5"/><text x="762.6" y="426.0" fill="#ff0000" stroke="#ff0000">93</text>
<rect x="836.1" y="414.8" width="15.0" height="12.5"/><text x="836.7" y="425.1" fill="#ff0000" stroke="#ff0000">94</text>
<rect x="857.2" y="410.6" width="22.0" height="12.5"/><text x="857.9" y="421.0" fill="#ff0000" stroke="#ff0000">106</text>
<rect x="785.1" y="402.5" width="15.0" height="12.5"/><text x="785.7" y="412.9" fill="#ff1478" stroke="#ff1478">69</text>
<rect x="822.0" y="401.6" width="15.0" height="12.5"/><text x="822.6" y="412.0" fill="#ff1478" stroke="#ff1478">76</text>
<rect x="757.0" y="399.8" width="22.0" height="12.5"/><text x="757.6" y="410.1" fill="#ff0000" stroke="#ff0000">106</text>
<rect x="405.8" y="395.0" width="15.0" height="12.5"/><text x="406.4" y="405.4" fill="#ff1478" stroke="#ff1478">63</text>
<rect x="645.0" y="392.8" width="15.0" height="12.5"/><text x="645.6" y="403.1" fill="#ff1478" stroke="#ff1478">80</text>
<rect x="807.9" y="391.5" width="15.0" height="12.5"/><text x="808.5" y="401.9" fill="#ff1478" stroke="#ff1478">65</text>
<rect x="764.0" y="386.0" width="15.0" height="12.5"/><text x="764.6" y="396.4" fill="#ff0000" stroke="#ff0000">96</text>
<rect x="838.5" y="384.8" width="22.0" height="12.5"/><text x="839.1" y="395.1" fill="#ff0000" stroke="#ff0000">102</text>
<rect x="801.5" y="368.5" width="15.0" height="12.5"/><text x="802.1" y="378.9" fill="#ff1478" stroke="#ff1478">67</text>
<rect x="772.5" y="367.5" width="15.0" height="12.5"/><text x="773.1" y="377.9" fill="#ff1478" stroke="#ff1478">81</text>
<rect x="393.8" y="358.0" width="15.0" height="12.5"/><text x="394.4" y="368.4" fill="#ffff00" stroke="#ffff00">59</text>
<rect x="805.2" y="346.8" width="15.0" height="12.5"/><text x="805.9" y="357.1" fill="#ff1478" stroke="#ff1478">74</text>
<rect x="489.5" y="341.8" width="15.0" height="12.5"/><text x="490.1" y="352.1" fill="#ffff00" stroke="#ffff00">57</text>
<rect x="519.2" y="341.8" width="15.0" height="12.5"/><text x="519.9" y="352.1" fill="#ff1478" stroke="#ff1478">70</text>
<rect x="820.8" y="340.5" width="15.0" height="12.5"/><text x="821.4" y="350.9" fill="#ff1478" stroke="#ff1478">87</text>
<rect x="759.8" y="325.5" width="15.0" height="12.5"/><text x="760.4" y="335.9" fill="#ff1478" stroke="#ff1478">72</text>
<rect x="724.0" y="323.8" width="15.0" height="12.5"/><text x="724.6" y="334.1" fill="#ff1478" stroke="#ff1478">80</text>
<rect x="777.0" y="310.5" width="15.0" height="12.5"/><text x="777.6" y="320.9" fill="#ff1478" stroke="#ff1478">76</text>
<rect x="723.0" y="306.0" width="15.0" height="12.5"/><text x="723.6" y="316.4" fill="#ffff00" stroke="#ffff00">46</text>
<rect x="786.2" y="299.8" width="15.0" height="12.5"/><text x="786.9" y="310.1" fill="#ffff00" stroke="#ffff00">57</text>
<rect x="701.0" y="299.5" width="15.0" height="12.5"/><text x="701.6" y="309.9" fill="#ff0000" stroke="#ff0000">96</text>
<rect x="795.0" y="289.8" width="15.0" height="12.5"/><text x="795.6" y="300.1" fill="#ffff00" stroke="#ffff00">46</text>
<rect x="703.0" y="289.2" width="15.0" height="12.5"/><text x="703.6" y="299.6" fill="#ff1478" stroke="#ff1478">80</text>
<rect x="771.2" y="281.8" width="15.0" height="12.5"/><text x="771.9" y="292.1" fill="#ffff00" stroke="#ffff00">46</text>
<rect x="818.2" y="281.8" width="15.0" height="12.5"/><text x="818.9" y="292.1" fill="#ff1478" stroke="#ff1478">76</text>
<rect x="430.8" y="278.0" width="15.0" height="12.5"/><text x="431.4" y="288.4" fill="#ffff00" stroke="#ffff00">59</text>
<rect x="681.0" y="269.5" width="22.0" height="12.5"/><text x="681.6" y="279.9" fill="#ff0000" stroke="#ff0000">100</text>
<rect x="787.0" y="266.0" width="15.0" height="12.5"/><text x="787.6" y="276.4" fill="#ffff00" stroke="#ffff00">54</text>
<rect x="744.0" y="256.8" width="15.0" height="12.5"/><text x="744.6" y="267.1" fill="#ffff00" stroke="#ffff00">46</text>
<rect x="797.0" y="254.8" width="15.0" height="12.5"/><text x="797.6" y="265.1" fill="#ffff00" stroke="#ffff00">46</text>
<rect x="734.0" y="245.0" width="15.0" height="12.5"/><text x="734.6" y="255.4" fill="#ffff00" stroke="#ffff00">61</text>
<rect x="762.2" y="245.0" width="15.0" height="12.5"/><text x="762.9" y="255.4" fill="#ff1478" stroke="#ff1478">83</text>
<rect x="685.2" y="240.5" width="22.0" height="12.5"/><text x="685.9" y="250.9" fill="#ff0000" stroke="#ff0000">100</text>
<rect x="813.2" y="237.5" width="15.0" height="12.5"/><text x="813.9" y="247.9" fill="#ff1478" stroke="#ff1478">72</text>
<rect x="519.8" y="231.0" width="15.0" height="12.5"/><text x="520.4" y="241.4" fill="#ffff00" stroke="#ffff00">56</text>
<rect x="541.0" y="231.0" width="15.0" height="12.5"/><text x="541.6" y="241.4" fill="#ffff00" stroke="#ffff00">46</text>
<rect x="830.8" y="226.2" width="15.0" height="12.5"/><text x="831.4" y="236.7" fill="#ffff00" stroke="#ffff00">50</text>
<rect x="692.8" y="223.0" width="15.0" height="12.5"/><text x="693.4" y="233.4" fill="#ffff00" stroke="#ffff00">61</text>
<rect x="538.5" y="215.0" width="15.0" height="12.5"/><text x="539.1" y="225.4" fill="#ffff00" stroke="#ffff00">57</text>
<rect x="785.8" y="209.8" width="15.0" height="12.5"/><text x="786.4" y="220.2" fill="#00ffff" stroke="#00ffff">35</text>
<rect x="747.2" y="208.0" width="15.0" height="12.5"/><text x="747.9" y="218.4" fill="#ffff00" stroke="#ffff00">57</text>
<rect x="721.0" y="207.2" width="15.0" height="12.5"/><text x="721.6" y="217.7" fill="#00ffff" stroke="#00ffff">31</text>
<rect x="854.0" y="206.8" width="15.0" height="12.5"/><text x="854.6" y="217.2" fill="#ffff00" stroke="#ffff00">43</text>
<rect x="681.0" y="201.0" width="15.0" height="12.5"/><text x="681.6" y="211.4" fill="#ff0000" stroke="#ff0000">94</text>
<rect x="788.2" y="189.0" width="15.0" height="12.5"/><text x="788.9" y="199.4" fill="#00ffff" stroke="#00ffff">35</text>
<rect x="816.5" y="183.0" width="15.0" height="12.5"/><text x="817.1" y="193.4" fill="#ffff00" stroke="#ffff00">54</text>
<rect x="726.0" y="180.5" width="15.0" height="12.5"/><text x="726.6" y="190.9" fill="#ffff00" stroke="#ffff00">46</text>
<rect x="623.5" y="178.5" width="15.0" height="12.5"/><text x="624.1" y="188.9" fill="#ff1478" stroke="#ff1478">72</text>
<rect x="858.8" y="173.5" width="15.0" height="12.5"/><text x="859.4" y="183.9" fill="#ffff00" stroke="#ffff00">43</text>
<rect x="833.2" y="168.5" width="15.0" height="12.5"/><text x="833.9" y="178.9" fill="#00ffff" stroke="#00ffff">35</text>
<rect x="805.2" y="164.8" width="15.0" height="12.5"/><text x="805.9" y="175.2" fill="#ff1478" stroke="#ff1478">76</text>
<rect x="676.0" y="160.5" width="22.0" height="12.5"/><text x="676.6" y="170.9" fill="#ff0000" stroke="#ff0000">169</text>
<rect x="853.8" y="144.8" width="15.0" height="12.5"/><text x="854.4" y="155.2" fill="#ffff00" stroke="#ffff00">50</text>
<rect x="724.2" y="143.5" width="15.0" height="12.5"/><text x="724.9" y="153.9" fill="#00ffff" stroke="#00ffff">31</text>
<rect x="686.8" y="136.5" width="15.0" height="12.5"/><text x="687.4" y="146.9" fill="#ff1478" stroke="#ff1478">87</text>
<rect x="789.0" y="132.8" width="15.0" height="12.5"/><text x="789.6" y="143.2" fill="#ffff00" stroke="#ffff00">43</text>
<rect x="824.0" y="125.5" width="15.0" height="12.5"/><text x="824.6" y="135.9" fill="#ffff00" stroke="#ffff00">46</text>
<rect x="694.0" y="121.5" width="15.0" height="12.5"/><text x="694.6" y="131.9" fill="#ff1478" stroke="#ff1478">87</text>
<rect x="713.5" y="109.8" width="15.0" height="12.5"/><text x="714.1" y="120.2" fill="#ffff00" stroke="#ffff00">57</text>
<rect x="723.5" y="94.8" width="15.0" height="12.5"/><text x="724.1" y="105.2" fill="#ff1478" stroke="#ff1478">83</text>
<rect x="847.0" y="66.0" width="15.0" height="12.5"/><text x="847.6" y="76.4" fill="#00ffff" stroke="#00ffff">30</text>
<rect x="757.2" y="61.0" width="15.0" height="12.5"/><text x="757.9" y="71.4" fill="#ff1478" stroke="#ff1478">72</text>
<rect x="795.8" y="50.5" width="15.0" height="12.5"/><text x="796.4" y="60.9" fill="#ffff00" stroke="#ffff00">61</text>
<rect x="769.0" y="43.0" width="15.0" height="12.5"/><text x="769.6" y="53.4" fill="#ffff00" stroke="#ffff00">54</text>
<rect x="840.2" y="34.0" width="15.0" height="12.5"/><text x="840.9" y="44.4" fill="#00ff00" stroke="#00ff00">22</text>
<rect x="792.0" y="26.0" width="15.0" height="12.5"/><text x="792.6" y="36.4" fill="#ff1478" stroke="#ff1478">65</text>
<rect x="816.2" y="13.0" width="15.0" height="12.5"/><text x="816.9" y="23.4" fill="#ffff00" stroke="#ffff00">57</text>
</g>
</svg></body></html>
